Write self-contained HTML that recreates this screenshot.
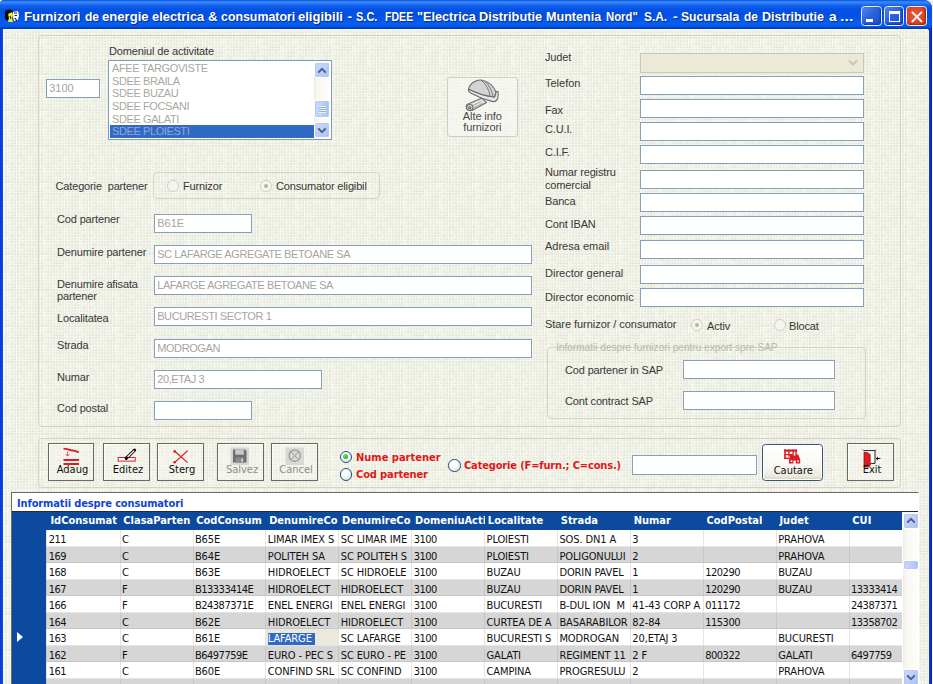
<!DOCTYPE html>
<html lang="ro">
<head>
<meta charset="utf-8">
<title>Furnizori de energie electrica &amp; consumatori eligibili</title>
<style>
*{box-sizing:border-box;margin:0;padding:0}
html,body{width:933px;height:684px;overflow:hidden;background:#f4f4ee}
body{position:relative;font-family:"Liberation Sans",sans-serif;font-size:11px;color:#222}
.abs,#win *{position:absolute}
#win{position:absolute;left:0;top:0;width:932px;height:690px;overflow:hidden;border-radius:4px 8px 0 0;background:linear-gradient(90deg,#0838d0 0,#0a48e2 2px,#0a48e2 928px,#0a3fdc 929px,#0426b4 931.5px,#021c98 932px)}
/* title bar */
#tb{left:0;top:0;width:932px;height:29px;border-radius:4px 8px 0 0;background:linear-gradient(#0a4cd4 0,#2f7ef6 1.5px,#3585fb 3px,#1565ee 5px,#0452e4 9px,#0350e4 15px,#0558ec 20px,#0660f2 24px,#0556e6 26.5px,#0342c8 28px,#02329f 29px)}
#ttl{left:24px;top:7.6px;width:840px;height:18px;line-height:18px;color:#fff;font-weight:bold;font-size:13.5px;white-space:nowrap;text-shadow:1px 1px 1px #0a2a8a}
.wb{top:6px;width:20.5px;height:20px;border:1px solid #e8f0ff;border-radius:3.5px;background:linear-gradient(135deg,#4f86f2 0,#2c63de 45%,#1d4ecb 100%);box-shadow:inset -1px -1px 2px #1236a8}
.wb.cl{background:radial-gradient(circle at 45% 45%,#f05a36 0,#e2482a 50%,#c7360f 100%);box-shadow:inset -1px -1px 2px #9a2a0a}
/* client */
#cl{left:3px;top:29px;width:925px;height:655px;border-top:1px solid #fbfbf6;border-left:1px solid #fbfbf6;background:#eff0e6}
.gb{border:1px solid #d5d3c4;border-radius:4px}
.lbl{white-space:nowrap;line-height:14px;color:#383838;letter-spacing:-.15px}
.tx{background:#fff;border:1px solid #86a0bb;height:19px;line-height:17px;padding-left:2.2px;color:#a6a59c;white-space:nowrap;overflow:hidden}

.gb2{border:1px solid #d6d5c7;border-radius:4px}
.tx.w{color:#000}
.lb{background:#fff;border:1px solid #7f9db9}
.li{left:1px;width:204px;height:13px;line-height:13px;padding-left:2px;color:#a9a8a0;white-space:nowrap;letter-spacing:-.4px}
.li.sel{background:#316ac5;color:#8fa8d8}
.rd{width:12px;height:12px;border-radius:50%;border:1px solid #d2d0c4;background:#f6f6f0}
.rd.on::after{content:"";position:absolute;left:3px;top:3px;width:4px;height:4px;border-radius:50%;background:#b5b3a5}
.dis{color:#2a2a2a}

.tb{font-family:"DejaVu Sans Condensed","DejaVu Sans","Liberation Sans",sans-serif}
.btn{border:1px solid #696962;background:rgba(250,250,244,.35);box-shadow:inset 1px 1px 0 rgba(255,255,255,.8)}
.btn.xp{border:1.5px solid #3d5578;border-radius:3.5px;background:linear-gradient(#ffffff 0,#f8f8f4 55%,#eceadf 88%,#d9d6c8 100%);box-shadow:inset 0 0 0 1px #fdfdfb,inset -1px -2px 1px #dcdacd}
.btn .cap{left:1.5px;width:100%;text-align:center;bottom:3.8px;line-height:13px;font-size:11px;color:#111;font-family:"DejaVu Sans Condensed","Liberation Sans",sans-serif}
.btn.off .cap{color:#8e8e86}
.xr{width:12.5px;height:12.5px;border-radius:50%;border:1px solid #1c5180;background:radial-gradient(circle at 35% 30%,#fff 30%,#dcdad0 100%)}
.xr.on::after{content:"";position:absolute;left:2.75px;top:2.75px;width:5px;height:5px;border-radius:50%;background:radial-gradient(circle at 35% 30%,#6fdc6a,#1e9a1e)}
.rl{color:#e01818;font-weight:bold;font-size:11px;line-height:13px;white-space:nowrap;font-family:"DejaVu Sans Condensed","Liberation Sans",sans-serif}
#grid{left:11px;top:492px;width:908px;height:200px;border:1px solid #6b6b66;border-right-color:#fff;background:#fff;overflow:hidden;font-family:"DejaVu Sans Condensed","Liberation Sans",sans-serif;font-size:11px}
#gt{left:5px;top:4px;line-height:14px;color:#1046cc;font-weight:bold;font-size:11px;letter-spacing:-.13px;white-space:nowrap}
#gh{left:0;top:19px;width:889.8px;height:18px;background:#0b4a9e}
#gl{left:0;top:18.3px;width:908px;height:1.1px;background:#2a2a26}
#gs{left:0;top:37px;width:34.5px;height:170px;background:#0b4a9e}
.hc{top:2px;line-height:14px;color:#fff;font-weight:bold;white-space:nowrap;overflow:hidden}
.gr{left:34.3px;width:855.7px;height:16.5px;background:#fff}
.gr.g{background:#d6d6d6}
.gc{top:0;height:16.5px;line-height:20.4px;padding-left:1.4px;letter-spacing:-.12px;border-left:1px solid #e4e4e4;border-bottom:1px solid #e4e4e4;color:#111;white-space:pre;overflow:hidden}
.gr.g .gc{border-left-color:#c6c6c6;border-bottom-color:#c6c6c6}

.sbt{background:linear-gradient(90deg,#eeede5 0,#f8f7f2 3px,#fefefb 100%)}
.sbb{left:0;width:100%;border:1px solid #fff;border-radius:2.5px;background:linear-gradient(135deg,#cbdafc 0,#bdcff8 50%,#adc2f2 100%);box-shadow:inset 0 0 0 1px #b7caf5,inset -1px -1px 1px #98b0e6}
.sbb svg{left:2.5px;top:3.5px}
.sbh{left:0;width:100%;border:1px solid #fff;border-radius:2.5px;background:linear-gradient(90deg,#cad9fc 0,#bccff9 50%,#a9bff2 100%);box-shadow:inset 0 0 0 1px #b7caf5}
.btn.xp .cap{bottom:2.8px;left:1px}
#ttl span{top:0;white-space:nowrap;transform-origin:0 50%}
</style>
</head>
<body>
<div id="win">
 <div id="tb"></div>
 <div id="ttl"><span style="left:0.4px;transform:scaleX(0.978)">Furnizori</span><span style="left:60.8px;transform:scaleX(0.894)">de</span><span style="left:78.1px;transform:scaleX(0.97)">energie</span><span style="left:127.9px;transform:scaleX(0.953)">electrica</span><span style="left:184.1px;transform:scaleX(0.985)">&amp;</span><span style="left:196.7px;transform:scaleX(0.916)">consumatori</span><span style="left:274.3px;transform:scaleX(0.965)">eligibili</span><span style="left:323.5px;transform:scaleX(1.0)">-</span><span style="left:331.5px;transform:scaleX(0.815)">S.C.</span><span style="left:360.5px;transform:scaleX(0.783)">FDEE</span><span style="left:392.9px;transform:scaleX(0.939)">&quot;Electrica</span><span style="left:455.3px;transform:scaleX(0.945)">Distributie</span><span style="left:522.3px;transform:scaleX(0.932)">Muntenia</span><span style="left:581.5px;transform:scaleX(0.839)">Nord&quot;</span><span style="left:620.1px;transform:scaleX(0.883)">S.A.</span><span style="left:649.0px;transform:scaleX(1.044)">-</span><span style="left:657.1px;transform:scaleX(0.902)">Sucursala</span><span style="left:719.5px;transform:scaleX(0.875)">de</span><span style="left:738.0px;transform:scaleX(0.927)">Distributie</span><span style="left:804.5px;transform:scaleX(1.025)">a</span><span style="left:816.1px;transform:scaleX(1.189)">...</span></div>
 <div class="wb" style="left:861px"><div style="left:4px;top:12px;width:7px;height:3px;background:#fff"></div></div>
 <div class="wb" style="left:883.5px"><div style="left:4px;top:4px;width:11px;height:11px;border:1px solid #fff;border-top-width:3px"></div></div>
 <div class="wb cl" style="left:906px"><svg style="left:3.6px;top:3.6px" width="12" height="12" viewBox="0 0 12 12"><path d="M1.4 1.4L10.4 10.4M10.4 1.4L1.4 10.4" stroke="#fff" stroke-width="2" stroke-linecap="round"/></svg></div>
 <svg id="ico" style="left:5px;top:8.6px" width="16" height="15" viewBox="0 0 16 15"><path d="M0 2Q2 0 6 0.5L8 3L5 6L3 12L0 10Z" fill="#0a0a0a"/><path d="M3 5L7 3L8 6L7 9L8 13L3 13L4 9Z" fill="#f2ee1c"/><path d="M8 3L13 2L14 6L13 11L9 12L8 8Z" fill="#fbfbf0"/><path d="M9 4L12 4M9.5 6.5L12 6.5M10 9L12 12" stroke="#2a1040" stroke-width="1.2"/><path d="M5 7L6 10" stroke="#1a1a00" stroke-width="1"/></svg>
 <div id="cl"><svg id="bgsvg" width="925" height="655" style="left:0;top:0"><defs><pattern id="wv" width="36" height="36" patternUnits="userSpaceOnUse"><rect width="36" height="36" fill="#eff0e6"/><rect x="0" y="0" width="1" height="1" fill="#f6f7ed"/><rect x="1" y="0" width="1" height="1" fill="#f2f3e9"/><rect x="3" y="0" width="1" height="1" fill="#f7f8ee"/><rect x="4" y="0" width="2" height="1" fill="#f6f7ed"/><rect x="6" y="0" width="1" height="1" fill="#f8f9ef"/><rect x="7" y="0" width="1" height="1" fill="#f3f4ea"/><rect x="8" y="0" width="1" height="1" fill="#f2f3e9"/><rect x="9" y="0" width="1" height="1" fill="#f6f7ed"/><rect x="11" y="0" width="1" height="1" fill="#f1f2e8"/><rect x="12" y="0" width="1" height="1" fill="#f7f8ee"/><rect x="14" y="0" width="1" height="1" fill="#f2f3e9"/><rect x="15" y="0" width="1" height="1" fill="#f8f9ef"/><rect x="17" y="0" width="1" height="1" fill="#f2f3e9"/><rect x="18" y="0" width="1" height="1" fill="#f3f4ea"/><rect x="21" y="0" width="1" height="1" fill="#f8f9ef"/><rect x="22" y="0" width="1" height="1" fill="#f4f5eb"/><rect x="24" y="0" width="1" height="1" fill="#f8f9ef"/><rect x="25" y="0" width="1" height="1" fill="#f4f5eb"/><rect x="26" y="0" width="1" height="1" fill="#f1f2e8"/><rect x="27" y="0" width="1" height="1" fill="#f7f8ee"/><rect x="28" y="0" width="1" height="1" fill="#f3f4ea"/><rect x="29" y="0" width="1" height="1" fill="#f5f6ec"/><rect x="30" y="0" width="1" height="1" fill="#f6f7ed"/><rect x="32" y="0" width="1" height="1" fill="#f1f2e8"/><rect x="33" y="0" width="1" height="1" fill="#f7f8ee"/><rect x="0" y="1" width="1" height="1" fill="#f4f5eb"/><rect x="2" y="1" width="1" height="1" fill="#eaebe1"/><rect x="3" y="1" width="1" height="1" fill="#f2f3e9"/><rect x="5" y="1" width="1" height="1" fill="#edeee4"/><rect x="6" y="1" width="1" height="1" fill="#f5f6ec"/><rect x="8" y="1" width="1" height="1" fill="#edeee4"/><rect x="9" y="1" width="1" height="1" fill="#f5f6ec"/><rect x="11" y="1" width="1" height="1" fill="#e9eae0"/><rect x="12" y="1" width="1" height="1" fill="#f2f3e9"/><rect x="14" y="1" width="1" height="1" fill="#e9eae0"/><rect x="15" y="1" width="1" height="1" fill="#f2f3e9"/><rect x="17" y="1" width="1" height="1" fill="#e9eae0"/><rect x="18" y="1" width="1" height="1" fill="#f1f2e8"/><rect x="19" y="1" width="1" height="1" fill="#ebece2"/><rect x="20" y="1" width="1" height="1" fill="#eaebe1"/><rect x="21" y="1" width="1" height="1" fill="#f4f5eb"/><rect x="22" y="1" width="1" height="1" fill="#f1f2e8"/><rect x="23" y="1" width="1" height="1" fill="#ecede3"/><rect x="24" y="1" width="1" height="1" fill="#f4f5eb"/><rect x="26" y="1" width="1" height="1" fill="#ebece2"/><rect x="27" y="1" width="1" height="1" fill="#f6f7ed"/><rect x="29" y="1" width="1" height="1" fill="#ecede3"/><rect x="31" y="1" width="2" height="1" fill="#eaebe1"/><rect x="33" y="1" width="1" height="1" fill="#f1f2e8"/><rect x="35" y="1" width="1" height="1" fill="#eaebe1"/><rect x="0" y="2" width="1" height="1" fill="#f4f5eb"/><rect x="1" y="2" width="1" height="1" fill="#eaebe1"/><rect x="2" y="2" width="1" height="1" fill="#e6e7dd"/><rect x="3" y="2" width="1" height="1" fill="#f2f3e9"/><rect x="4" y="2" width="1" height="1" fill="#ebece2"/><rect x="5" y="2" width="1" height="1" fill="#e7e8de"/><rect x="6" y="2" width="1" height="1" fill="#f4f5eb"/><rect x="7" y="2" width="1" height="1" fill="#ecede3"/><rect x="8" y="2" width="1" height="1" fill="#e7e8de"/><rect x="9" y="2" width="1" height="1" fill="#f3f4ea"/><rect x="10" y="2" width="1" height="1" fill="#e9eae0"/><rect x="11" y="2" width="1" height="1" fill="#e7e8de"/><rect x="12" y="2" width="1" height="1" fill="#f4f5eb"/><rect x="13" y="2" width="1" height="1" fill="#ebece2"/><rect x="14" y="2" width="1" height="1" fill="#e7e8de"/><rect x="15" y="2" width="1" height="1" fill="#f3f4ea"/><rect x="16" y="2" width="1" height="1" fill="#edeee4"/><rect x="17" y="2" width="1" height="1" fill="#e8e9df"/><rect x="18" y="2" width="1" height="1" fill="#f2f3e9"/><rect x="19" y="2" width="1" height="1" fill="#e9eae0"/><rect x="20" y="2" width="1" height="1" fill="#e5e6dc"/><rect x="21" y="2" width="1" height="1" fill="#f4f5eb"/><rect x="23" y="2" width="1" height="1" fill="#e8e9df"/><rect x="24" y="2" width="1" height="1" fill="#f5f6ec"/><rect x="25" y="2" width="1" height="1" fill="#ebece2"/><rect x="26" y="2" width="1" height="1" fill="#e7e8de"/><rect x="27" y="2" width="1" height="1" fill="#f4f5eb"/><rect x="28" y="2" width="1" height="1" fill="#ebece2"/><rect x="29" y="2" width="1" height="1" fill="#e8e9df"/><rect x="30" y="2" width="1" height="1" fill="#f2f3e9"/><rect x="31" y="2" width="1" height="1" fill="#eaebe1"/><rect x="32" y="2" width="1" height="1" fill="#e4e5db"/><rect x="33" y="2" width="1" height="1" fill="#f2f3e9"/><rect x="34" y="2" width="1" height="1" fill="#e7e8de"/><rect x="35" y="2" width="1" height="1" fill="#e4e5db"/><rect x="0" y="3" width="1" height="1" fill="#f6f7ed"/><rect x="3" y="3" width="1" height="1" fill="#f8f9ef"/><rect x="4" y="3" width="2" height="1" fill="#f4f5eb"/><rect x="6" y="3" width="1" height="1" fill="#f6f7ed"/><rect x="7" y="3" width="1" height="1" fill="#f4f5eb"/><rect x="8" y="3" width="1" height="1" fill="#f3f4ea"/><rect x="9" y="3" width="1" height="1" fill="#f2f3e9"/><rect x="11" y="3" width="1" height="1" fill="#ecede3"/><rect x="12" y="3" width="1" height="1" fill="#f8f9ef"/><rect x="13" y="3" width="1" height="1" fill="#f6f7ed"/><rect x="14" y="3" width="1" height="1" fill="#f5f6ec"/><rect x="15" y="3" width="1" height="1" fill="#fafbf1"/><rect x="16" y="3" width="1" height="1" fill="#f3f4ea"/><rect x="17" y="3" width="1" height="1" fill="#f5f6ec"/><rect x="18" y="3" width="1" height="1" fill="#fafbf1"/><rect x="19" y="3" width="1" height="1" fill="#f2f3e9"/><rect x="21" y="3" width="1" height="1" fill="#f5f6ec"/><rect x="22" y="3" width="1" height="1" fill="#f3f4ea"/><rect x="23" y="3" width="2" height="1" fill="#f4f5eb"/><rect x="25" y="3" width="1" height="1" fill="#f1f2e8"/><rect x="26" y="3" width="1" height="1" fill="#edeee4"/><rect x="27" y="3" width="1" height="1" fill="#f2f3e9"/><rect x="30" y="3" width="1" height="1" fill="#f6f7ed"/><rect x="32" y="3" width="2" height="1" fill="#f3f4ea"/><rect x="35" y="3" width="1" height="1" fill="#edeee4"/><rect x="0" y="4" width="1" height="1" fill="#f1f2e8"/><rect x="1" y="4" width="1" height="1" fill="#edeee4"/><rect x="2" y="4" width="1" height="1" fill="#e9eae0"/><rect x="3" y="4" width="1" height="1" fill="#f5f6ec"/><rect x="4" y="4" width="1" height="1" fill="#f4f5eb"/><rect x="5" y="4" width="1" height="1" fill="#edeee4"/><rect x="6" y="4" width="1" height="1" fill="#f4f5eb"/><rect x="10" y="4" width="1" height="1" fill="#edeee4"/><rect x="11" y="4" width="1" height="1" fill="#e9eae0"/><rect x="12" y="4" width="1" height="1" fill="#f9faf0"/><rect x="13" y="4" width="1" height="1" fill="#f1f2e8"/><rect x="14" y="4" width="1" height="1" fill="#ecede3"/><rect x="15" y="4" width="1" height="1" fill="#f5f6ec"/><rect x="16" y="4" width="1" height="1" fill="#f3f4ea"/><rect x="18" y="4" width="1" height="1" fill="#f5f6ec"/><rect x="20" y="4" width="1" height="1" fill="#ebece2"/><rect x="21" y="4" width="1" height="1" fill="#f6f7ed"/><rect x="22" y="4" width="1" height="1" fill="#f3f4ea"/><rect x="23" y="4" width="1" height="1" fill="#eaebe1"/><rect x="25" y="4" width="1" height="1" fill="#edeee4"/><rect x="26" y="4" width="1" height="1" fill="#eaebe1"/><rect x="28" y="4" width="1" height="1" fill="#eaebe1"/><rect x="29" y="4" width="1" height="1" fill="#e7e8de"/><rect x="30" y="4" width="1" height="1" fill="#f4f5eb"/><rect x="31" y="4" width="2" height="1" fill="#ecede3"/><rect x="34" y="4" width="1" height="1" fill="#ecede3"/><rect x="35" y="4" width="1" height="1" fill="#e6e7dd"/><rect x="0" y="5" width="1" height="1" fill="#f3f4ea"/><rect x="1" y="5" width="1" height="1" fill="#e9eae0"/><rect x="2" y="5" width="1" height="1" fill="#e2e3d9"/><rect x="3" y="5" width="1" height="1" fill="#f7f8ee"/><rect x="5" y="5" width="1" height="1" fill="#ecede3"/><rect x="6" y="5" width="1" height="1" fill="#f2f3e9"/><rect x="7" y="5" width="1" height="1" fill="#eaebe1"/><rect x="8" y="5" width="1" height="1" fill="#e8e9df"/><rect x="10" y="5" width="1" height="1" fill="#e8e9df"/><rect x="11" y="5" width="1" height="1" fill="#e1e2d8"/><rect x="12" y="5" width="1" height="1" fill="#f9faf0"/><rect x="14" y="5" width="1" height="1" fill="#eaebe1"/><rect x="15" y="5" width="1" height="1" fill="#f4f5eb"/><rect x="17" y="5" width="1" height="1" fill="#e6e7dd"/><rect x="18" y="5" width="1" height="1" fill="#f6f7ed"/><rect x="19" y="5" width="1" height="1" fill="#ebece2"/><rect x="20" y="5" width="1" height="1" fill="#e4e5db"/><rect x="21" y="5" width="1" height="1" fill="#f2f3e9"/><rect x="23" y="5" width="1" height="1" fill="#e4e5db"/><rect x="25" y="5" width="1" height="1" fill="#e8e9df"/><rect x="26" y="5" width="1" height="1" fill="#e3e4da"/><rect x="28" y="5" width="1" height="1" fill="#e8e9df"/><rect x="29" y="5" width="1" height="1" fill="#e2e3d9"/><rect x="30" y="5" width="1" height="1" fill="#f4f5eb"/><rect x="31" y="5" width="1" height="1" fill="#e9eae0"/><rect x="32" y="5" width="1" height="1" fill="#e5e6dc"/><rect x="33" y="5" width="1" height="1" fill="#f2f3e9"/><rect x="34" y="5" width="1" height="1" fill="#e6e7dd"/><rect x="35" y="5" width="1" height="1" fill="#e1e2d8"/><rect x="0" y="6" width="1" height="1" fill="#f3f4ea"/><rect x="2" y="6" width="1" height="1" fill="#edeee4"/><rect x="3" y="6" width="1" height="1" fill="#f3f4ea"/><rect x="4" y="6" width="1" height="1" fill="#f2f3e9"/><rect x="6" y="6" width="1" height="1" fill="#f4f5eb"/><rect x="9" y="6" width="1" height="1" fill="#f7f8ee"/><rect x="10" y="6" width="1" height="1" fill="#f1f2e8"/><rect x="12" y="6" width="1" height="1" fill="#f6f7ed"/><rect x="14" y="6" width="1" height="1" fill="#f1f2e8"/><rect x="15" y="6" width="1" height="1" fill="#f7f8ee"/><rect x="16" y="6" width="1" height="1" fill="#f2f3e9"/><rect x="17" y="6" width="1" height="1" fill="#f5f6ec"/><rect x="18" y="6" width="1" height="1" fill="#f6f7ed"/><rect x="19" y="6" width="1" height="1" fill="#f1f2e8"/><rect x="20" y="6" width="1" height="1" fill="#f4f5eb"/><rect x="21" y="6" width="1" height="1" fill="#f6f7ed"/><rect x="22" y="6" width="2" height="1" fill="#f3f4ea"/><rect x="24" y="6" width="1" height="1" fill="#f7f8ee"/><rect x="25" y="6" width="1" height="1" fill="#f2f3e9"/><rect x="27" y="6" width="1" height="1" fill="#f7f8ee"/><rect x="29" y="6" width="1" height="1" fill="#f1f2e8"/><rect x="30" y="6" width="1" height="1" fill="#f7f8ee"/><rect x="33" y="6" width="1" height="1" fill="#f7f8ee"/><rect x="34" y="6" width="1" height="1" fill="#f2f3e9"/><rect x="1" y="7" width="1" height="1" fill="#eaebe1"/><rect x="2" y="7" width="1" height="1" fill="#e6e7dd"/><rect x="4" y="7" width="2" height="1" fill="#eaebe1"/><rect x="6" y="7" width="1" height="1" fill="#ebece2"/><rect x="7" y="7" width="1" height="1" fill="#eaebe1"/><rect x="8" y="7" width="1" height="1" fill="#e6e7dd"/><rect x="10" y="7" width="1" height="1" fill="#ecede3"/><rect x="11" y="7" width="1" height="1" fill="#e7e8de"/><rect x="12" y="7" width="1" height="1" fill="#f1f2e8"/><rect x="13" y="7" width="1" height="1" fill="#e9eae0"/><rect x="14" y="7" width="1" height="1" fill="#e7e8de"/><rect x="15" y="7" width="1" height="1" fill="#f4f5eb"/><rect x="17" y="7" width="1" height="1" fill="#e9eae0"/><rect x="19" y="7" width="1" height="1" fill="#edeee4"/><rect x="20" y="7" width="1" height="1" fill="#e7e8de"/><rect x="23" y="7" width="1" height="1" fill="#e8e9df"/><rect x="24" y="7" width="1" height="1" fill="#f2f3e9"/><rect x="25" y="7" width="1" height="1" fill="#ebece2"/><rect x="26" y="7" width="1" height="1" fill="#e8e9df"/><rect x="27" y="7" width="1" height="1" fill="#f1f2e8"/><rect x="28" y="7" width="2" height="1" fill="#ebece2"/><rect x="30" y="7" width="1" height="1" fill="#f1f2e8"/><rect x="31" y="7" width="1" height="1" fill="#ecede3"/><rect x="32" y="7" width="1" height="1" fill="#e9eae0"/><rect x="34" y="7" width="1" height="1" fill="#ecede3"/><rect x="35" y="7" width="1" height="1" fill="#e8e9df"/><rect x="1" y="8" width="1" height="1" fill="#e6e7dd"/><rect x="2" y="8" width="1" height="1" fill="#dfe0d6"/><rect x="4" y="8" width="1" height="1" fill="#e7e8de"/><rect x="5" y="8" width="1" height="1" fill="#e3e4da"/><rect x="6" y="8" width="1" height="1" fill="#ebece2"/><rect x="7" y="8" width="1" height="1" fill="#e3e4da"/><rect x="8" y="8" width="1" height="1" fill="#e0e1d7"/><rect x="10" y="8" width="1" height="1" fill="#e8e9df"/><rect x="11" y="8" width="1" height="1" fill="#e4e5db"/><rect x="12" y="8" width="1" height="1" fill="#f2f3e9"/><rect x="13" y="8" width="1" height="1" fill="#e5e6dc"/><rect x="14" y="8" width="1" height="1" fill="#e3e4da"/><rect x="15" y="8" width="1" height="1" fill="#f3f4ea"/><rect x="16" y="8" width="1" height="1" fill="#ebece2"/><rect x="17" y="8" width="1" height="1" fill="#e5e6dc"/><rect x="18" y="8" width="1" height="1" fill="#f1f2e8"/><rect x="19" y="8" width="1" height="1" fill="#eaebe1"/><rect x="20" y="8" width="1" height="1" fill="#e3e4da"/><rect x="21" y="8" width="1" height="1" fill="#f1f2e8"/><rect x="22" y="8" width="1" height="1" fill="#ecede3"/><rect x="23" y="8" width="1" height="1" fill="#e2e3d9"/><rect x="25" y="8" width="1" height="1" fill="#e6e7dd"/><rect x="26" y="8" width="1" height="1" fill="#e1e2d8"/><rect x="28" y="8" width="1" height="1" fill="#e8e9df"/><rect x="29" y="8" width="1" height="1" fill="#e2e3d9"/><rect x="31" y="8" width="1" height="1" fill="#e8e9df"/><rect x="32" y="8" width="1" height="1" fill="#e4e5db"/><rect x="34" y="8" width="1" height="1" fill="#e8e9df"/><rect x="35" y="8" width="1" height="1" fill="#e1e2d8"/><rect x="0" y="9" width="1" height="1" fill="#fbfcf2"/><rect x="1" y="9" width="2" height="1" fill="#f5f6ec"/><rect x="3" y="9" width="2" height="1" fill="#f9faf0"/><rect x="5" y="9" width="1" height="1" fill="#f8f9ef"/><rect x="6" y="9" width="1" height="1" fill="#f7f8ee"/><rect x="7" y="9" width="1" height="1" fill="#f4f5eb"/><rect x="8" y="9" width="2" height="1" fill="#f6f7ed"/><rect x="10" y="9" width="1" height="1" fill="#f2f3e9"/><rect x="11" y="9" width="1" height="1" fill="#f4f5eb"/><rect x="12" y="9" width="1" height="1" fill="#f3f4ea"/><rect x="13" y="9" width="1" height="1" fill="#f1f2e8"/><rect x="15" y="9" width="1" height="1" fill="#f6f7ed"/><rect x="17" y="9" width="1" height="1" fill="#f2f3e9"/><rect x="18" y="9" width="1" height="1" fill="#f4f5eb"/><rect x="21" y="9" width="1" height="1" fill="#f4f5eb"/><rect x="23" y="9" width="1" height="1" fill="#f1f2e8"/><rect x="24" y="9" width="1" height="1" fill="#fafbf1"/><rect x="25" y="9" width="2" height="1" fill="#f1f2e8"/><rect x="27" y="9" width="1" height="1" fill="#f4f5eb"/><rect x="29" y="9" width="1" height="1" fill="#f2f3e9"/><rect x="30" y="9" width="1" height="1" fill="#f9faf0"/><rect x="31" y="9" width="1" height="1" fill="#f4f5eb"/><rect x="32" y="9" width="2" height="1" fill="#f3f4ea"/><rect x="35" y="9" width="1" height="1" fill="#f3f4ea"/><rect x="0" y="10" width="1" height="1" fill="#f8f9ef"/><rect x="1" y="10" width="1" height="1" fill="#f2f3e9"/><rect x="2" y="10" width="1" height="1" fill="#edeee4"/><rect x="3" y="10" width="1" height="1" fill="#f9faf0"/><rect x="4" y="10" width="1" height="1" fill="#f3f4ea"/><rect x="5" y="10" width="1" height="1" fill="#f1f2e8"/><rect x="6" y="10" width="1" height="1" fill="#f4f5eb"/><rect x="8" y="10" width="1" height="1" fill="#ecede3"/><rect x="9" y="10" width="1" height="1" fill="#f4f5eb"/><rect x="10" y="10" width="2" height="1" fill="#edeee4"/><rect x="13" y="10" width="1" height="1" fill="#edeee4"/><rect x="14" y="10" width="1" height="1" fill="#eaebe1"/><rect x="15" y="10" width="1" height="1" fill="#f2f3e9"/><rect x="16" y="10" width="1" height="1" fill="#ebece2"/><rect x="17" y="10" width="1" height="1" fill="#e8e9df"/><rect x="18" y="10" width="1" height="1" fill="#f3f4ea"/><rect x="19" y="10" width="1" height="1" fill="#ecede3"/><rect x="20" y="10" width="1" height="1" fill="#e8e9df"/><rect x="21" y="10" width="1" height="1" fill="#f2f3e9"/><rect x="22" y="10" width="1" height="1" fill="#ebece2"/><rect x="23" y="10" width="1" height="1" fill="#eaebe1"/><rect x="24" y="10" width="1" height="1" fill="#f4f5eb"/><rect x="27" y="10" width="1" height="1" fill="#f2f3e9"/><rect x="29" y="10" width="1" height="1" fill="#eaebe1"/><rect x="30" y="10" width="1" height="1" fill="#f8f9ef"/><rect x="31" y="10" width="1" height="1" fill="#f1f2e8"/><rect x="32" y="10" width="1" height="1" fill="#edeee4"/><rect x="33" y="10" width="1" height="1" fill="#f1f2e8"/><rect x="34" y="10" width="1" height="1" fill="#edeee4"/><rect x="35" y="10" width="1" height="1" fill="#eaebe1"/><rect x="0" y="11" width="1" height="1" fill="#f6f7ed"/><rect x="2" y="11" width="1" height="1" fill="#e7e8de"/><rect x="3" y="11" width="1" height="1" fill="#f7f8ee"/><rect x="5" y="11" width="1" height="1" fill="#ecede3"/><rect x="6" y="11" width="1" height="1" fill="#f7f8ee"/><rect x="8" y="11" width="1" height="1" fill="#e7e8de"/><rect x="9" y="11" width="1" height="1" fill="#f4f5eb"/><rect x="11" y="11" width="1" height="1" fill="#e6e7dd"/><rect x="12" y="11" width="1" height="1" fill="#f3f4ea"/><rect x="13" y="11" width="1" height="1" fill="#ecede3"/><rect x="14" y="11" width="1" height="1" fill="#e6e7dd"/><rect x="15" y="11" width="1" height="1" fill="#f2f3e9"/><rect x="16" y="11" width="1" height="1" fill="#e8e9df"/><rect x="17" y="11" width="1" height="1" fill="#e4e5db"/><rect x="18" y="11" width="1" height="1" fill="#f3f4ea"/><rect x="19" y="11" width="1" height="1" fill="#e9eae0"/><rect x="20" y="11" width="1" height="1" fill="#e3e4da"/><rect x="22" y="11" width="1" height="1" fill="#e8e9df"/><rect x="23" y="11" width="1" height="1" fill="#e2e3d9"/><rect x="24" y="11" width="1" height="1" fill="#f3f4ea"/><rect x="25" y="11" width="1" height="1" fill="#edeee4"/><rect x="26" y="11" width="1" height="1" fill="#e9eae0"/><rect x="27" y="11" width="1" height="1" fill="#f1f2e8"/><rect x="28" y="11" width="1" height="1" fill="#e8e9df"/><rect x="29" y="11" width="1" height="1" fill="#e6e7dd"/><rect x="30" y="11" width="1" height="1" fill="#f5f6ec"/><rect x="31" y="11" width="1" height="1" fill="#edeee4"/><rect x="32" y="11" width="1" height="1" fill="#e6e7dd"/><rect x="33" y="11" width="1" height="1" fill="#f1f2e8"/><rect x="34" y="11" width="1" height="1" fill="#ebece2"/><rect x="35" y="11" width="1" height="1" fill="#e5e6dc"/><rect x="0" y="12" width="1" height="1" fill="#fbfcf2"/><rect x="1" y="12" width="1" height="1" fill="#f7f8ee"/><rect x="2" y="12" width="1" height="1" fill="#f4f5eb"/><rect x="3" y="12" width="1" height="1" fill="#f9faf0"/><rect x="4" y="12" width="2" height="1" fill="#f6f7ed"/><rect x="6" y="12" width="1" height="1" fill="#f3f4ea"/><rect x="9" y="12" width="1" height="1" fill="#f3f4ea"/><rect x="11" y="12" width="1" height="1" fill="#f2f3e9"/><rect x="12" y="12" width="1" height="1" fill="#fbfcf2"/><rect x="13" y="12" width="1" height="1" fill="#f4f5eb"/><rect x="14" y="12" width="1" height="1" fill="#f2f3e9"/><rect x="15" y="12" width="1" height="1" fill="#f8f9ef"/><rect x="16" y="12" width="1" height="1" fill="#f3f4ea"/><rect x="17" y="12" width="1" height="1" fill="#f2f3e9"/><rect x="18" y="12" width="1" height="1" fill="#f9faf0"/><rect x="19" y="12" width="1" height="1" fill="#f4f5eb"/><rect x="20" y="12" width="1" height="1" fill="#f6f7ed"/><rect x="21" y="12" width="2" height="1" fill="#f4f5eb"/><rect x="23" y="12" width="1" height="1" fill="#f1f2e8"/><rect x="24" y="12" width="1" height="1" fill="#f2f3e9"/><rect x="27" y="12" width="1" height="1" fill="#f6f7ed"/><rect x="28" y="12" width="1" height="1" fill="#f1f2e8"/><rect x="29" y="12" width="1" height="1" fill="#f4f5eb"/><rect x="30" y="12" width="1" height="1" fill="#f7f8ee"/><rect x="31" y="12" width="2" height="1" fill="#f5f6ec"/><rect x="33" y="12" width="1" height="1" fill="#f3f4ea"/><rect x="35" y="12" width="1" height="1" fill="#f1f2e8"/><rect x="0" y="13" width="1" height="1" fill="#f6f7ed"/><rect x="1" y="13" width="1" height="1" fill="#f3f4ea"/><rect x="2" y="13" width="1" height="1" fill="#edeee4"/><rect x="3" y="13" width="1" height="1" fill="#f6f7ed"/><rect x="4" y="13" width="2" height="1" fill="#f1f2e8"/><rect x="6" y="13" width="1" height="1" fill="#f2f3e9"/><rect x="7" y="13" width="1" height="1" fill="#ebece2"/><rect x="8" y="13" width="1" height="1" fill="#e7e8de"/><rect x="9" y="13" width="1" height="1" fill="#f1f2e8"/><rect x="10" y="13" width="1" height="1" fill="#edeee4"/><rect x="11" y="13" width="1" height="1" fill="#e7e8de"/><rect x="12" y="13" width="1" height="1" fill="#f6f7ed"/><rect x="14" y="13" width="1" height="1" fill="#edeee4"/><rect x="15" y="13" width="1" height="1" fill="#f2f3e9"/><rect x="17" y="13" width="1" height="1" fill="#e9eae0"/><rect x="18" y="13" width="1" height="1" fill="#f5f6ec"/><rect x="20" y="13" width="1" height="1" fill="#ecede3"/><rect x="21" y="13" width="1" height="1" fill="#f2f3e9"/><rect x="22" y="13" width="1" height="1" fill="#f1f2e8"/><rect x="23" y="13" width="1" height="1" fill="#ecede3"/><rect x="25" y="13" width="1" height="1" fill="#ebece2"/><rect x="26" y="13" width="1" height="1" fill="#eaebe1"/><rect x="27" y="13" width="1" height="1" fill="#f4f5eb"/><rect x="29" y="13" width="1" height="1" fill="#ecede3"/><rect x="30" y="13" width="1" height="1" fill="#f3f4ea"/><rect x="31" y="13" width="1" height="1" fill="#f1f2e8"/><rect x="32" y="13" width="1" height="1" fill="#ebece2"/><rect x="33" y="13" width="1" height="1" fill="#f2f3e9"/><rect x="35" y="13" width="1" height="1" fill="#e9eae0"/><rect x="0" y="14" width="1" height="1" fill="#f6f7ed"/><rect x="2" y="14" width="1" height="1" fill="#eaebe1"/><rect x="3" y="14" width="1" height="1" fill="#f6f7ed"/><rect x="4" y="14" width="1" height="1" fill="#edeee4"/><rect x="5" y="14" width="1" height="1" fill="#ecede3"/><rect x="7" y="14" width="1" height="1" fill="#e8e9df"/><rect x="8" y="14" width="1" height="1" fill="#e4e5db"/><rect x="10" y="14" width="1" height="1" fill="#e9eae0"/><rect x="11" y="14" width="1" height="1" fill="#e5e6dc"/><rect x="12" y="14" width="1" height="1" fill="#f4f5eb"/><rect x="13" y="14" width="1" height="1" fill="#ecede3"/><rect x="14" y="14" width="1" height="1" fill="#e6e7dd"/><rect x="15" y="14" width="1" height="1" fill="#f1f2e8"/><rect x="16" y="14" width="1" height="1" fill="#e9eae0"/><rect x="17" y="14" width="1" height="1" fill="#e4e5db"/><rect x="18" y="14" width="1" height="1" fill="#f8f9ef"/><rect x="20" y="14" width="1" height="1" fill="#eaebe1"/><rect x="21" y="14" width="1" height="1" fill="#f3f4ea"/><rect x="23" y="14" width="1" height="1" fill="#e3e4da"/><rect x="24" y="14" width="1" height="1" fill="#f1f2e8"/><rect x="25" y="14" width="1" height="1" fill="#e6e7dd"/><rect x="26" y="14" width="1" height="1" fill="#e3e4da"/><rect x="27" y="14" width="1" height="1" fill="#f6f7ed"/><rect x="28" y="14" width="1" height="1" fill="#ebece2"/><rect x="29" y="14" width="1" height="1" fill="#e5e6dc"/><rect x="30" y="14" width="1" height="1" fill="#f4f5eb"/><rect x="31" y="14" width="1" height="1" fill="#ecede3"/><rect x="32" y="14" width="1" height="1" fill="#e9eae0"/><rect x="33" y="14" width="1" height="1" fill="#f4f5eb"/><rect x="34" y="14" width="1" height="1" fill="#eaebe1"/><rect x="35" y="14" width="1" height="1" fill="#e6e7dd"/><rect x="0" y="15" width="1" height="1" fill="#f5f6ec"/><rect x="3" y="15" width="1" height="1" fill="#f7f8ee"/><rect x="4" y="15" width="1" height="1" fill="#f4f5eb"/><rect x="5" y="15" width="1" height="1" fill="#f3f4ea"/><rect x="6" y="15" width="1" height="1" fill="#fafbf1"/><rect x="7" y="15" width="1" height="1" fill="#f3f4ea"/><rect x="8" y="15" width="2" height="1" fill="#f7f8ee"/><rect x="10" y="15" width="1" height="1" fill="#f5f6ec"/><rect x="11" y="15" width="1" height="1" fill="#f1f2e8"/><rect x="12" y="15" width="1" height="1" fill="#f6f7ed"/><rect x="15" y="15" width="1" height="1" fill="#f3f4ea"/><rect x="18" y="15" width="1" height="1" fill="#f5f6ec"/><rect x="21" y="15" width="1" height="1" fill="#f5f6ec"/><rect x="22" y="15" width="1" height="1" fill="#f3f4ea"/><rect x="23" y="15" width="1" height="1" fill="#ecede3"/><rect x="24" y="15" width="1" height="1" fill="#f9faf0"/><rect x="25" y="15" width="2" height="1" fill="#f4f5eb"/><rect x="27" y="15" width="1" height="1" fill="#f3f4ea"/><rect x="28" y="15" width="1" height="1" fill="#f1f2e8"/><rect x="30" y="15" width="1" height="1" fill="#f9faf0"/><rect x="31" y="15" width="1" height="1" fill="#f2f3e9"/><rect x="33" y="15" width="1" height="1" fill="#f8f9ef"/><rect x="35" y="15" width="1" height="1" fill="#f2f3e9"/><rect x="0" y="16" width="1" height="1" fill="#f1f2e8"/><rect x="1" y="16" width="1" height="1" fill="#edeee4"/><rect x="2" y="16" width="1" height="1" fill="#e9eae0"/><rect x="3" y="16" width="1" height="1" fill="#f2f3e9"/><rect x="5" y="16" width="1" height="1" fill="#ebece2"/><rect x="6" y="16" width="1" height="1" fill="#f4f5eb"/><rect x="7" y="16" width="1" height="1" fill="#f2f3e9"/><rect x="8" y="16" width="1" height="1" fill="#ecede3"/><rect x="9" y="16" width="1" height="1" fill="#f3f4ea"/><rect x="11" y="16" width="1" height="1" fill="#ecede3"/><rect x="12" y="16" width="1" height="1" fill="#f2f3e9"/><rect x="13" y="16" width="1" height="1" fill="#ebece2"/><rect x="14" y="16" width="1" height="1" fill="#e8e9df"/><rect x="16" y="16" width="1" height="1" fill="#ecede3"/><rect x="17" y="16" width="1" height="1" fill="#e8e9df"/><rect x="18" y="16" width="1" height="1" fill="#f2f3e9"/><rect x="19" y="16" width="2" height="1" fill="#e9eae0"/><rect x="21" y="16" width="1" height="1" fill="#f1f2e8"/><rect x="22" y="16" width="1" height="1" fill="#edeee4"/><rect x="23" y="16" width="1" height="1" fill="#e6e7dd"/><rect x="24" y="16" width="1" height="1" fill="#f4f5eb"/><rect x="26" y="16" width="1" height="1" fill="#ecede3"/><rect x="29" y="16" width="1" height="1" fill="#eaebe1"/><rect x="30" y="16" width="1" height="1" fill="#f5f6ec"/><rect x="32" y="16" width="1" height="1" fill="#eaebe1"/><rect x="33" y="16" width="1" height="1" fill="#f5f6ec"/><rect x="35" y="16" width="1" height="1" fill="#e9eae0"/><rect x="0" y="17" width="1" height="1" fill="#f2f3e9"/><rect x="1" y="17" width="1" height="1" fill="#e7e8de"/><rect x="2" y="17" width="1" height="1" fill="#e4e5db"/><rect x="3" y="17" width="1" height="1" fill="#f3f4ea"/><rect x="4" y="17" width="1" height="1" fill="#ebece2"/><rect x="5" y="17" width="1" height="1" fill="#e7e8de"/><rect x="6" y="17" width="1" height="1" fill="#f7f8ee"/><rect x="8" y="17" width="1" height="1" fill="#e9eae0"/><rect x="9" y="17" width="1" height="1" fill="#f4f5eb"/><rect x="10" y="17" width="1" height="1" fill="#ecede3"/><rect x="11" y="17" width="1" height="1" fill="#e8e9df"/><rect x="13" y="17" width="1" height="1" fill="#e9eae0"/><rect x="14" y="17" width="1" height="1" fill="#e4e5db"/><rect x="15" y="17" width="1" height="1" fill="#f1f2e8"/><rect x="16" y="17" width="1" height="1" fill="#e7e8de"/><rect x="17" y="17" width="1" height="1" fill="#e5e6dc"/><rect x="19" y="17" width="1" height="1" fill="#e8e9df"/><rect x="20" y="17" width="1" height="1" fill="#e1e2d8"/><rect x="22" y="17" width="1" height="1" fill="#eaebe1"/><rect x="23" y="17" width="1" height="1" fill="#e3e4da"/><rect x="24" y="17" width="1" height="1" fill="#f3f4ea"/><rect x="26" y="17" width="1" height="1" fill="#e9eae0"/><rect x="27" y="17" width="1" height="1" fill="#f2f3e9"/><rect x="28" y="17" width="1" height="1" fill="#eaebe1"/><rect x="29" y="17" width="1" height="1" fill="#e2e3d9"/><rect x="30" y="17" width="1" height="1" fill="#f2f3e9"/><rect x="31" y="17" width="1" height="1" fill="#eaebe1"/><rect x="32" y="17" width="1" height="1" fill="#e4e5db"/><rect x="33" y="17" width="1" height="1" fill="#f2f3e9"/><rect x="34" y="17" width="1" height="1" fill="#ecede3"/><rect x="35" y="17" width="1" height="1" fill="#e4e5db"/><rect x="0" y="18" width="1" height="1" fill="#f6f7ed"/><rect x="3" y="18" width="1" height="1" fill="#f9faf0"/><rect x="4" y="18" width="1" height="1" fill="#f5f6ec"/><rect x="5" y="18" width="2" height="1" fill="#f4f5eb"/><rect x="7" y="18" width="1" height="1" fill="#f1f2e8"/><rect x="9" y="18" width="1" height="1" fill="#f7f8ee"/><rect x="10" y="18" width="1" height="1" fill="#f4f5eb"/><rect x="11" y="18" width="1" height="1" fill="#f1f2e8"/><rect x="12" y="18" width="1" height="1" fill="#f4f5eb"/><rect x="14" y="18" width="1" height="1" fill="#f1f2e8"/><rect x="15" y="18" width="1" height="1" fill="#f4f5eb"/><rect x="16" y="18" width="1" height="1" fill="#f2f3e9"/><rect x="17" y="18" width="1" height="1" fill="#f1f2e8"/><rect x="18" y="18" width="1" height="1" fill="#f3f4ea"/><rect x="20" y="18" width="1" height="1" fill="#f1f2e8"/><rect x="21" y="18" width="1" height="1" fill="#f6f7ed"/><rect x="23" y="18" width="1" height="1" fill="#f1f2e8"/><rect x="24" y="18" width="1" height="1" fill="#f9faf0"/><rect x="25" y="18" width="1" height="1" fill="#f6f7ed"/><rect x="26" y="18" width="1" height="1" fill="#f5f6ec"/><rect x="27" y="18" width="1" height="1" fill="#f7f8ee"/><rect x="28" y="18" width="1" height="1" fill="#f5f6ec"/><rect x="29" y="18" width="1" height="1" fill="#f4f5eb"/><rect x="30" y="18" width="1" height="1" fill="#f5f6ec"/><rect x="31" y="18" width="1" height="1" fill="#f1f2e8"/><rect x="33" y="18" width="1" height="1" fill="#f7f8ee"/><rect x="34" y="18" width="1" height="1" fill="#f6f7ed"/><rect x="35" y="18" width="1" height="1" fill="#f3f4ea"/><rect x="1" y="19" width="2" height="1" fill="#eaebe1"/><rect x="3" y="19" width="1" height="1" fill="#f7f8ee"/><rect x="4" y="19" width="1" height="1" fill="#f2f3e9"/><rect x="7" y="19" width="1" height="1" fill="#ebece2"/><rect x="8" y="19" width="1" height="1" fill="#e7e8de"/><rect x="9" y="19" width="1" height="1" fill="#f3f4ea"/><rect x="11" y="19" width="1" height="1" fill="#ebece2"/><rect x="13" y="19" width="1" height="1" fill="#ecede3"/><rect x="14" y="19" width="1" height="1" fill="#e7e8de"/><rect x="15" y="19" width="1" height="1" fill="#f2f3e9"/><rect x="16" y="19" width="1" height="1" fill="#ecede3"/><rect x="17" y="19" width="1" height="1" fill="#e8e9df"/><rect x="18" y="19" width="1" height="1" fill="#f2f3e9"/><rect x="19" y="19" width="1" height="1" fill="#ecede3"/><rect x="20" y="19" width="1" height="1" fill="#ebece2"/><rect x="23" y="19" width="1" height="1" fill="#e7e8de"/><rect x="24" y="19" width="1" height="1" fill="#f5f6ec"/><rect x="27" y="19" width="1" height="1" fill="#f5f6ec"/><rect x="30" y="19" width="1" height="1" fill="#f2f3e9"/><rect x="32" y="19" width="1" height="1" fill="#ebece2"/><rect x="33" y="19" width="1" height="1" fill="#f5f6ec"/><rect x="34" y="19" width="1" height="1" fill="#f1f2e8"/><rect x="35" y="19" width="1" height="1" fill="#ecede3"/><rect x="0" y="20" width="1" height="1" fill="#f1f2e8"/><rect x="1" y="20" width="1" height="1" fill="#eaebe1"/><rect x="2" y="20" width="1" height="1" fill="#e4e5db"/><rect x="3" y="20" width="1" height="1" fill="#f3f4ea"/><rect x="4" y="20" width="1" height="1" fill="#edeee4"/><rect x="5" y="20" width="1" height="1" fill="#ebece2"/><rect x="6" y="20" width="1" height="1" fill="#f2f3e9"/><rect x="7" y="20" width="1" height="1" fill="#e9eae0"/><rect x="8" y="20" width="1" height="1" fill="#e2e3d9"/><rect x="9" y="20" width="1" height="1" fill="#f6f7ed"/><rect x="10" y="20" width="1" height="1" fill="#ecede3"/><rect x="11" y="20" width="1" height="1" fill="#e5e6dc"/><rect x="13" y="20" width="1" height="1" fill="#e9eae0"/><rect x="14" y="20" width="1" height="1" fill="#e5e6dc"/><rect x="15" y="20" width="1" height="1" fill="#f3f4ea"/><rect x="16" y="20" width="1" height="1" fill="#e9eae0"/><rect x="17" y="20" width="1" height="1" fill="#e6e7dd"/><rect x="19" y="20" width="1" height="1" fill="#e9eae0"/><rect x="20" y="20" width="1" height="1" fill="#e3e4da"/><rect x="22" y="20" width="1" height="1" fill="#ecede3"/><rect x="23" y="20" width="1" height="1" fill="#e4e5db"/><rect x="24" y="20" width="1" height="1" fill="#f8f9ef"/><rect x="26" y="20" width="1" height="1" fill="#e8e9df"/><rect x="27" y="20" width="1" height="1" fill="#f6f7ed"/><rect x="28" y="20" width="1" height="1" fill="#ecede3"/><rect x="29" y="20" width="1" height="1" fill="#e8e9df"/><rect x="30" y="20" width="1" height="1" fill="#f2f3e9"/><rect x="31" y="20" width="1" height="1" fill="#eaebe1"/><rect x="32" y="20" width="1" height="1" fill="#e3e4da"/><rect x="33" y="20" width="1" height="1" fill="#f7f8ee"/><rect x="34" y="20" width="1" height="1" fill="#edeee4"/><rect x="35" y="20" width="1" height="1" fill="#e9eae0"/><rect x="0" y="21" width="1" height="1" fill="#f2f3e9"/><rect x="1" y="21" width="1" height="1" fill="#f1f2e8"/><rect x="2" y="21" width="1" height="1" fill="#f2f3e9"/><rect x="3" y="21" width="1" height="1" fill="#f6f7ed"/><rect x="4" y="21" width="1" height="1" fill="#f1f2e8"/><rect x="5" y="21" width="1" height="1" fill="#f5f6ec"/><rect x="6" y="21" width="1" height="1" fill="#f9faf0"/><rect x="7" y="21" width="1" height="1" fill="#f3f4ea"/><rect x="8" y="21" width="1" height="1" fill="#f4f5eb"/><rect x="9" y="21" width="1" height="1" fill="#f9faf0"/><rect x="11" y="21" width="1" height="1" fill="#f3f4ea"/><rect x="12" y="21" width="1" height="1" fill="#f5f6ec"/><rect x="13" y="21" width="1" height="1" fill="#f1f2e8"/><rect x="14" y="21" width="1" height="1" fill="#ecede3"/><rect x="15" y="21" width="1" height="1" fill="#fafbf1"/><rect x="16" y="21" width="1" height="1" fill="#f6f7ed"/><rect x="17" y="21" width="1" height="1" fill="#f5f6ec"/><rect x="18" y="21" width="1" height="1" fill="#f6f7ed"/><rect x="21" y="21" width="1" height="1" fill="#f5f6ec"/><rect x="22" y="21" width="2" height="1" fill="#f1f2e8"/><rect x="24" y="21" width="1" height="1" fill="#f8f9ef"/><rect x="25" y="21" width="1" height="1" fill="#f1f2e8"/><rect x="26" y="21" width="1" height="1" fill="#f5f6ec"/><rect x="27" y="21" width="1" height="1" fill="#f6f7ed"/><rect x="28" y="21" width="1" height="1" fill="#f1f2e8"/><rect x="30" y="21" width="1" height="1" fill="#f6f7ed"/><rect x="32" y="21" width="1" height="1" fill="#f1f2e8"/><rect x="33" y="21" width="1" height="1" fill="#f2f3e9"/><rect x="35" y="21" width="1" height="1" fill="#edeee4"/><rect x="1" y="22" width="1" height="1" fill="#ebece2"/><rect x="2" y="22" width="1" height="1" fill="#eaebe1"/><rect x="3" y="22" width="1" height="1" fill="#f2f3e9"/><rect x="6" y="22" width="1" height="1" fill="#f7f8ee"/><rect x="7" y="22" width="1" height="1" fill="#f3f4ea"/><rect x="8" y="22" width="1" height="1" fill="#ecede3"/><rect x="9" y="22" width="1" height="1" fill="#f3f4ea"/><rect x="10" y="22" width="1" height="1" fill="#f1f2e8"/><rect x="11" y="22" width="1" height="1" fill="#eaebe1"/><rect x="12" y="22" width="1" height="1" fill="#f2f3e9"/><rect x="13" y="22" width="1" height="1" fill="#edeee4"/><rect x="14" y="22" width="1" height="1" fill="#e9eae0"/><rect x="15" y="22" width="1" height="1" fill="#f7f8ee"/><rect x="16" y="22" width="1" height="1" fill="#f1f2e8"/><rect x="17" y="22" width="1" height="1" fill="#edeee4"/><rect x="19" y="22" width="1" height="1" fill="#ecede3"/><rect x="20" y="22" width="1" height="1" fill="#e9eae0"/><rect x="22" y="22" width="1" height="1" fill="#f1f2e8"/><rect x="23" y="22" width="1" height="1" fill="#ebece2"/><rect x="24" y="22" width="1" height="1" fill="#f4f5eb"/><rect x="27" y="22" width="1" height="1" fill="#f3f4ea"/><rect x="28" y="22" width="1" height="1" fill="#ecede3"/><rect x="29" y="22" width="1" height="1" fill="#ebece2"/><rect x="30" y="22" width="1" height="1" fill="#f2f3e9"/><rect x="31" y="22" width="1" height="1" fill="#edeee4"/><rect x="32" y="22" width="1" height="1" fill="#ebece2"/><rect x="34" y="22" width="1" height="1" fill="#ecede3"/><rect x="35" y="22" width="1" height="1" fill="#e7e8de"/><rect x="0" y="23" width="1" height="1" fill="#f2f3e9"/><rect x="1" y="23" width="1" height="1" fill="#e8e9df"/><rect x="2" y="23" width="1" height="1" fill="#e5e6dc"/><rect x="3" y="23" width="1" height="1" fill="#f2f3e9"/><rect x="5" y="23" width="1" height="1" fill="#e6e7dd"/><rect x="6" y="23" width="1" height="1" fill="#f7f8ee"/><rect x="8" y="23" width="1" height="1" fill="#eaebe1"/><rect x="9" y="23" width="1" height="1" fill="#f4f5eb"/><rect x="10" y="23" width="1" height="1" fill="#ecede3"/><rect x="11" y="23" width="1" height="1" fill="#e5e6dc"/><rect x="12" y="23" width="1" height="1" fill="#f2f3e9"/><rect x="13" y="23" width="1" height="1" fill="#e9eae0"/><rect x="14" y="23" width="1" height="1" fill="#e3e4da"/><rect x="15" y="23" width="1" height="1" fill="#f7f8ee"/><rect x="17" y="23" width="1" height="1" fill="#e9eae0"/><rect x="19" y="23" width="1" height="1" fill="#e7e8de"/><rect x="20" y="23" width="1" height="1" fill="#e5e6dc"/><rect x="21" y="23" width="1" height="1" fill="#f2f3e9"/><rect x="22" y="23" width="1" height="1" fill="#ecede3"/><rect x="23" y="23" width="1" height="1" fill="#e4e5db"/><rect x="24" y="23" width="1" height="1" fill="#f3f4ea"/><rect x="26" y="23" width="1" height="1" fill="#e7e8de"/><rect x="27" y="23" width="1" height="1" fill="#f2f3e9"/><rect x="28" y="23" width="1" height="1" fill="#e9eae0"/><rect x="29" y="23" width="1" height="1" fill="#e3e4da"/><rect x="30" y="23" width="1" height="1" fill="#f4f5eb"/><rect x="31" y="23" width="1" height="1" fill="#ecede3"/><rect x="32" y="23" width="1" height="1" fill="#e2e3d9"/><rect x="34" y="23" width="1" height="1" fill="#e7e8de"/><rect x="35" y="23" width="1" height="1" fill="#e5e6dc"/><rect x="0" y="24" width="1" height="1" fill="#f4f5eb"/><rect x="1" y="24" width="1" height="1" fill="#f1f2e8"/><rect x="3" y="24" width="1" height="1" fill="#f7f8ee"/><rect x="4" y="24" width="1" height="1" fill="#f6f7ed"/><rect x="5" y="24" width="1" height="1" fill="#f5f6ec"/><rect x="6" y="24" width="1" height="1" fill="#f4f5eb"/><rect x="9" y="24" width="1" height="1" fill="#f7f8ee"/><rect x="10" y="24" width="2" height="1" fill="#f1f2e8"/><rect x="12" y="24" width="1" height="1" fill="#f7f8ee"/><rect x="15" y="24" width="1" height="1" fill="#f5f6ec"/><rect x="16" y="24" width="2" height="1" fill="#f3f4ea"/><rect x="18" y="24" width="1" height="1" fill="#fafbf1"/><rect x="19" y="24" width="1" height="1" fill="#f3f4ea"/><rect x="20" y="24" width="1" height="1" fill="#f4f5eb"/><rect x="21" y="24" width="1" height="1" fill="#f8f9ef"/><rect x="22" y="24" width="1" height="1" fill="#f4f5eb"/><rect x="23" y="24" width="1" height="1" fill="#f3f4ea"/><rect x="24" y="24" width="1" height="1" fill="#f9faf0"/><rect x="25" y="24" width="1" height="1" fill="#f3f4ea"/><rect x="26" y="24" width="1" height="1" fill="#f4f5eb"/><rect x="27" y="24" width="1" height="1" fill="#f9faf0"/><rect x="28" y="24" width="1" height="1" fill="#f2f3e9"/><rect x="29" y="24" width="1" height="1" fill="#f5f6ec"/><rect x="30" y="24" width="1" height="1" fill="#f7f8ee"/><rect x="33" y="24" width="1" height="1" fill="#f6f7ed"/><rect x="34" y="24" width="2" height="1" fill="#f1f2e8"/><rect x="1" y="25" width="1" height="1" fill="#ebece2"/><rect x="2" y="25" width="1" height="1" fill="#e4e5db"/><rect x="3" y="25" width="1" height="1" fill="#f1f2e8"/><rect x="5" y="25" width="1" height="1" fill="#edeee4"/><rect x="7" y="25" width="1" height="1" fill="#eaebe1"/><rect x="8" y="25" width="1" height="1" fill="#e7e8de"/><rect x="9" y="25" width="1" height="1" fill="#f1f2e8"/><rect x="10" y="25" width="1" height="1" fill="#ebece2"/><rect x="11" y="25" width="1" height="1" fill="#eaebe1"/><rect x="13" y="25" width="1" height="1" fill="#eaebe1"/><rect x="14" y="25" width="1" height="1" fill="#e6e7dd"/><rect x="16" y="25" width="1" height="1" fill="#e9eae0"/><rect x="17" y="25" width="1" height="1" fill="#e8e9df"/><rect x="18" y="25" width="1" height="1" fill="#f2f3e9"/><rect x="19" y="25" width="2" height="1" fill="#edeee4"/><rect x="23" y="25" width="1" height="1" fill="#e7e8de"/><rect x="24" y="25" width="1" height="1" fill="#f2f3e9"/><rect x="25" y="25" width="1" height="1" fill="#edeee4"/><rect x="26" y="25" width="1" height="1" fill="#e9eae0"/><rect x="27" y="25" width="1" height="1" fill="#f1f2e8"/><rect x="29" y="25" width="1" height="1" fill="#eaebe1"/><rect x="30" y="25" width="1" height="1" fill="#edeee4"/><rect x="31" y="25" width="1" height="1" fill="#e9eae0"/><rect x="32" y="25" width="1" height="1" fill="#e7e8de"/><rect x="34" y="25" width="1" height="1" fill="#e8e9df"/><rect x="35" y="25" width="1" height="1" fill="#e4e5db"/><rect x="1" y="26" width="1" height="1" fill="#e9eae0"/><rect x="2" y="26" width="1" height="1" fill="#e5e6dc"/><rect x="3" y="26" width="1" height="1" fill="#f2f3e9"/><rect x="5" y="26" width="1" height="1" fill="#e9eae0"/><rect x="6" y="26" width="1" height="1" fill="#f3f4ea"/><rect x="7" y="26" width="1" height="1" fill="#e8e9df"/><rect x="8" y="26" width="1" height="1" fill="#e3e4da"/><rect x="9" y="26" width="1" height="1" fill="#f3f4ea"/><rect x="10" y="26" width="1" height="1" fill="#edeee4"/><rect x="11" y="26" width="1" height="1" fill="#e8e9df"/><rect x="12" y="26" width="1" height="1" fill="#f4f5eb"/><rect x="13" y="26" width="1" height="1" fill="#e9eae0"/><rect x="14" y="26" width="1" height="1" fill="#e4e5db"/><rect x="15" y="26" width="1" height="1" fill="#f2f3e9"/><rect x="16" y="26" width="1" height="1" fill="#ebece2"/><rect x="17" y="26" width="1" height="1" fill="#e4e5db"/><rect x="18" y="26" width="1" height="1" fill="#f7f8ee"/><rect x="20" y="26" width="1" height="1" fill="#e9eae0"/><rect x="21" y="26" width="1" height="1" fill="#f2f3e9"/><rect x="22" y="26" width="1" height="1" fill="#ecede3"/><rect x="23" y="26" width="1" height="1" fill="#e6e7dd"/><rect x="24" y="26" width="1" height="1" fill="#f5f6ec"/><rect x="25" y="26" width="1" height="1" fill="#eaebe1"/><rect x="26" y="26" width="1" height="1" fill="#e7e8de"/><rect x="27" y="26" width="1" height="1" fill="#f8f9ef"/><rect x="29" y="26" width="1" height="1" fill="#eaebe1"/><rect x="30" y="26" width="1" height="1" fill="#f3f4ea"/><rect x="31" y="26" width="1" height="1" fill="#e8e9df"/><rect x="32" y="26" width="1" height="1" fill="#e2e3d9"/><rect x="33" y="26" width="1" height="1" fill="#f3f4ea"/><rect x="34" y="26" width="1" height="1" fill="#e8e9df"/><rect x="35" y="26" width="1" height="1" fill="#e1e2d8"/><rect x="0" y="27" width="1" height="1" fill="#fafbf1"/><rect x="1" y="27" width="1" height="1" fill="#f4f5eb"/><rect x="2" y="27" width="1" height="1" fill="#f3f4ea"/><rect x="3" y="27" width="1" height="1" fill="#fbfcf2"/><rect x="4" y="27" width="1" height="1" fill="#f6f7ed"/><rect x="5" y="27" width="1" height="1" fill="#f8f9ef"/><rect x="6" y="27" width="1" height="1" fill="#f4f5eb"/><rect x="8" y="27" width="1" height="1" fill="#f2f3e9"/><rect x="9" y="27" width="1" height="1" fill="#f4f5eb"/><rect x="10" y="27" width="1" height="1" fill="#f1f2e8"/><rect x="12" y="27" width="1" height="1" fill="#f9faf0"/><rect x="13" y="27" width="1" height="1" fill="#f1f2e8"/><rect x="14" y="27" width="1" height="1" fill="#f2f3e9"/><rect x="15" y="27" width="1" height="1" fill="#fafbf1"/><rect x="16" y="27" width="3" height="1" fill="#f6f7ed"/><rect x="19" y="27" width="1" height="1" fill="#f1f2e8"/><rect x="20" y="27" width="1" height="1" fill="#f2f3e9"/><rect x="21" y="27" width="1" height="1" fill="#f8f9ef"/><rect x="22" y="27" width="1" height="1" fill="#f5f6ec"/><rect x="23" y="27" width="1" height="1" fill="#f3f4ea"/><rect x="24" y="27" width="1" height="1" fill="#f9faf0"/><rect x="25" y="27" width="1" height="1" fill="#f3f4ea"/><rect x="26" y="27" width="1" height="1" fill="#f2f3e9"/><rect x="27" y="27" width="1" height="1" fill="#f5f6ec"/><rect x="28" y="27" width="2" height="1" fill="#f1f2e8"/><rect x="30" y="27" width="1" height="1" fill="#f5f6ec"/><rect x="31" y="27" width="1" height="1" fill="#f1f2e8"/><rect x="32" y="27" width="1" height="1" fill="#f2f3e9"/><rect x="33" y="27" width="1" height="1" fill="#f6f7ed"/><rect x="35" y="27" width="1" height="1" fill="#f1f2e8"/><rect x="0" y="28" width="1" height="1" fill="#f5f6ec"/><rect x="2" y="28" width="1" height="1" fill="#edeee4"/><rect x="3" y="28" width="1" height="1" fill="#f7f8ee"/><rect x="4" y="28" width="1" height="1" fill="#f4f5eb"/><rect x="6" y="28" width="1" height="1" fill="#f1f2e8"/><rect x="7" y="28" width="1" height="1" fill="#eaebe1"/><rect x="8" y="28" width="1" height="1" fill="#e8e9df"/><rect x="10" y="28" width="1" height="1" fill="#ebece2"/><rect x="11" y="28" width="1" height="1" fill="#e7e8de"/><rect x="12" y="28" width="1" height="1" fill="#f6f7ed"/><rect x="13" y="28" width="1" height="1" fill="#f1f2e8"/><rect x="14" y="28" width="1" height="1" fill="#ecede3"/><rect x="15" y="28" width="1" height="1" fill="#f6f7ed"/><rect x="18" y="28" width="1" height="1" fill="#f4f5eb"/><rect x="19" y="28" width="1" height="1" fill="#edeee4"/><rect x="20" y="28" width="1" height="1" fill="#eaebe1"/><rect x="21" y="28" width="1" height="1" fill="#f6f7ed"/><rect x="22" y="28" width="1" height="1" fill="#f4f5eb"/><rect x="23" y="28" width="1" height="1" fill="#edeee4"/><rect x="24" y="28" width="1" height="1" fill="#f8f9ef"/><rect x="25" y="28" width="1" height="1" fill="#f1f2e8"/><rect x="27" y="28" width="1" height="1" fill="#f4f5eb"/><rect x="28" y="28" width="1" height="1" fill="#edeee4"/><rect x="29" y="28" width="1" height="1" fill="#eaebe1"/><rect x="30" y="28" width="1" height="1" fill="#f3f4ea"/><rect x="32" y="28" width="1" height="1" fill="#ebece2"/><rect x="34" y="28" width="1" height="1" fill="#ecede3"/><rect x="35" y="28" width="1" height="1" fill="#e9eae0"/><rect x="0" y="29" width="1" height="1" fill="#f8f9ef"/><rect x="2" y="29" width="1" height="1" fill="#e6e7dd"/><rect x="3" y="29" width="1" height="1" fill="#f8f9ef"/><rect x="4" y="29" width="1" height="1" fill="#edeee4"/><rect x="5" y="29" width="1" height="1" fill="#e9eae0"/><rect x="6" y="29" width="1" height="1" fill="#f4f5eb"/><rect x="7" y="29" width="1" height="1" fill="#eaebe1"/><rect x="8" y="29" width="1" height="1" fill="#e5e6dc"/><rect x="9" y="29" width="1" height="1" fill="#f1f2e8"/><rect x="10" y="29" width="1" height="1" fill="#e8e9df"/><rect x="11" y="29" width="1" height="1" fill="#e2e3d9"/><rect x="12" y="29" width="1" height="1" fill="#f6f7ed"/><rect x="13" y="29" width="1" height="1" fill="#ecede3"/><rect x="14" y="29" width="1" height="1" fill="#e5e6dc"/><rect x="15" y="29" width="1" height="1" fill="#f5f6ec"/><rect x="16" y="29" width="1" height="1" fill="#ecede3"/><rect x="17" y="29" width="1" height="1" fill="#eaebe1"/><rect x="19" y="29" width="1" height="1" fill="#e7e8de"/><rect x="20" y="29" width="1" height="1" fill="#e4e5db"/><rect x="21" y="29" width="1" height="1" fill="#f5f6ec"/><rect x="22" y="29" width="1" height="1" fill="#f2f3e9"/><rect x="23" y="29" width="1" height="1" fill="#e9eae0"/><rect x="24" y="29" width="1" height="1" fill="#f6f7ed"/><rect x="25" y="29" width="1" height="1" fill="#edeee4"/><rect x="26" y="29" width="1" height="1" fill="#e7e8de"/><rect x="27" y="29" width="1" height="1" fill="#f4f5eb"/><rect x="28" y="29" width="1" height="1" fill="#ecede3"/><rect x="29" y="29" width="1" height="1" fill="#e4e5db"/><rect x="30" y="29" width="1" height="1" fill="#f1f2e8"/><rect x="31" y="29" width="1" height="1" fill="#ebece2"/><rect x="32" y="29" width="1" height="1" fill="#e6e7dd"/><rect x="33" y="29" width="1" height="1" fill="#f1f2e8"/><rect x="34" y="29" width="1" height="1" fill="#e7e8de"/><rect x="35" y="29" width="1" height="1" fill="#e2e3d9"/><rect x="0" y="30" width="1" height="1" fill="#f4f5eb"/><rect x="1" y="30" width="1" height="1" fill="#edeee4"/><rect x="3" y="30" width="1" height="1" fill="#fbfcf2"/><rect x="4" y="30" width="1" height="1" fill="#f8f9ef"/><rect x="5" y="30" width="2" height="1" fill="#f7f8ee"/><rect x="9" y="30" width="1" height="1" fill="#f7f8ee"/><rect x="10" y="30" width="1" height="1" fill="#f1f2e8"/><rect x="11" y="30" width="1" height="1" fill="#f3f4ea"/><rect x="12" y="30" width="1" height="1" fill="#f6f7ed"/><rect x="15" y="30" width="1" height="1" fill="#fafbf1"/><rect x="16" y="30" width="1" height="1" fill="#f5f6ec"/><rect x="17" y="30" width="1" height="1" fill="#f3f4ea"/><rect x="18" y="30" width="1" height="1" fill="#f7f8ee"/><rect x="20" y="30" width="1" height="1" fill="#f2f3e9"/><rect x="21" y="30" width="1" height="1" fill="#f3f4ea"/><rect x="22" y="30" width="1" height="1" fill="#f2f3e9"/><rect x="23" y="30" width="1" height="1" fill="#f1f2e8"/><rect x="24" y="30" width="1" height="1" fill="#f5f6ec"/><rect x="26" y="30" width="1" height="1" fill="#f1f2e8"/><rect x="27" y="30" width="1" height="1" fill="#f9faf0"/><rect x="28" y="30" width="1" height="1" fill="#f5f6ec"/><rect x="29" y="30" width="1" height="1" fill="#f3f4ea"/><rect x="30" y="30" width="1" height="1" fill="#f4f5eb"/><rect x="32" y="30" width="1" height="1" fill="#ecede3"/><rect x="33" y="30" width="1" height="1" fill="#f3f4ea"/><rect x="0" y="31" width="1" height="1" fill="#f2f3e9"/><rect x="1" y="31" width="1" height="1" fill="#ecede3"/><rect x="2" y="31" width="1" height="1" fill="#e9eae0"/><rect x="3" y="31" width="1" height="1" fill="#f8f9ef"/><rect x="4" y="31" width="1" height="1" fill="#f2f3e9"/><rect x="5" y="31" width="1" height="1" fill="#f1f2e8"/><rect x="6" y="31" width="1" height="1" fill="#f2f3e9"/><rect x="7" y="31" width="1" height="1" fill="#ecede3"/><rect x="8" y="31" width="1" height="1" fill="#eaebe1"/><rect x="9" y="31" width="1" height="1" fill="#f6f7ed"/><rect x="11" y="31" width="1" height="1" fill="#edeee4"/><rect x="12" y="31" width="1" height="1" fill="#f3f4ea"/><rect x="13" y="31" width="1" height="1" fill="#ecede3"/><rect x="14" y="31" width="1" height="1" fill="#ebece2"/><rect x="15" y="31" width="1" height="1" fill="#f5f6ec"/><rect x="16" y="31" width="1" height="1" fill="#f2f3e9"/><rect x="18" y="31" width="1" height="1" fill="#f4f5eb"/><rect x="19" y="31" width="1" height="1" fill="#f1f2e8"/><rect x="20" y="31" width="1" height="1" fill="#ebece2"/><rect x="21" y="31" width="1" height="1" fill="#f1f2e8"/><rect x="23" y="31" width="1" height="1" fill="#e9eae0"/><rect x="24" y="31" width="1" height="1" fill="#f3f4ea"/><rect x="25" y="31" width="1" height="1" fill="#eaebe1"/><rect x="26" y="31" width="1" height="1" fill="#e9eae0"/><rect x="27" y="31" width="1" height="1" fill="#f5f6ec"/><rect x="29" y="31" width="1" height="1" fill="#edeee4"/><rect x="30" y="31" width="1" height="1" fill="#f1f2e8"/><rect x="31" y="31" width="1" height="1" fill="#ebece2"/><rect x="32" y="31" width="1" height="1" fill="#eaebe1"/><rect x="34" y="31" width="1" height="1" fill="#edeee4"/><rect x="35" y="31" width="1" height="1" fill="#e8e9df"/><rect x="1" y="32" width="1" height="1" fill="#e7e8de"/><rect x="2" y="32" width="1" height="1" fill="#e3e4da"/><rect x="3" y="32" width="1" height="1" fill="#f8f9ef"/><rect x="5" y="32" width="1" height="1" fill="#ebece2"/><rect x="6" y="32" width="1" height="1" fill="#f3f4ea"/><rect x="7" y="32" width="1" height="1" fill="#e8e9df"/><rect x="8" y="32" width="1" height="1" fill="#e3e4da"/><rect x="9" y="32" width="1" height="1" fill="#f7f8ee"/><rect x="10" y="32" width="1" height="1" fill="#eaebe1"/><rect x="11" y="32" width="1" height="1" fill="#e7e8de"/><rect x="12" y="32" width="1" height="1" fill="#f3f4ea"/><rect x="13" y="32" width="1" height="1" fill="#eaebe1"/><rect x="14" y="32" width="1" height="1" fill="#e2e3d9"/><rect x="15" y="32" width="1" height="1" fill="#f8f9ef"/><rect x="16" y="32" width="1" height="1" fill="#ebece2"/><rect x="17" y="32" width="1" height="1" fill="#e5e6dc"/><rect x="18" y="32" width="1" height="1" fill="#f4f5eb"/><rect x="19" y="32" width="1" height="1" fill="#e9eae0"/><rect x="20" y="32" width="1" height="1" fill="#e5e6dc"/><rect x="21" y="32" width="1" height="1" fill="#f3f4ea"/><rect x="22" y="32" width="1" height="1" fill="#ecede3"/><rect x="23" y="32" width="1" height="1" fill="#e4e5db"/><rect x="24" y="32" width="1" height="1" fill="#f3f4ea"/><rect x="25" y="32" width="1" height="1" fill="#e7e8de"/><rect x="26" y="32" width="1" height="1" fill="#e6e7dd"/><rect x="27" y="32" width="1" height="1" fill="#f5f6ec"/><rect x="28" y="32" width="1" height="1" fill="#edeee4"/><rect x="29" y="32" width="1" height="1" fill="#e5e6dc"/><rect x="30" y="32" width="1" height="1" fill="#f2f3e9"/><rect x="31" y="32" width="1" height="1" fill="#e7e8de"/><rect x="32" y="32" width="1" height="1" fill="#e2e3d9"/><rect x="33" y="32" width="1" height="1" fill="#f2f3e9"/><rect x="34" y="32" width="1" height="1" fill="#e8e9df"/><rect x="35" y="32" width="1" height="1" fill="#e6e7dd"/><rect x="0" y="33" width="1" height="1" fill="#f9faf0"/><rect x="1" y="33" width="1" height="1" fill="#f1f2e8"/><rect x="3" y="33" width="2" height="1" fill="#f8f9ef"/><rect x="5" y="33" width="1" height="1" fill="#f5f6ec"/><rect x="6" y="33" width="1" height="1" fill="#f7f8ee"/><rect x="7" y="33" width="1" height="1" fill="#f1f2e8"/><rect x="8" y="33" width="1" height="1" fill="#f2f3e9"/><rect x="9" y="33" width="1" height="1" fill="#f7f8ee"/><rect x="12" y="33" width="1" height="1" fill="#fafbf1"/><rect x="13" y="33" width="1" height="1" fill="#f5f6ec"/><rect x="14" y="33" width="2" height="1" fill="#f3f4ea"/><rect x="17" y="33" width="1" height="1" fill="#f1f2e8"/><rect x="18" y="33" width="1" height="1" fill="#f3f4ea"/><rect x="19" y="33" width="1" height="1" fill="#ecede3"/><rect x="21" y="33" width="1" height="1" fill="#f4f5eb"/><rect x="22" y="33" width="1" height="1" fill="#f2f3e9"/><rect x="24" y="33" width="1" height="1" fill="#f5f6ec"/><rect x="27" y="33" width="1" height="1" fill="#f4f5eb"/><rect x="28" y="33" width="1" height="1" fill="#edeee4"/><rect x="29" y="33" width="1" height="1" fill="#f1f2e8"/><rect x="30" y="33" width="1" height="1" fill="#f6f7ed"/><rect x="33" y="33" width="1" height="1" fill="#f8f9ef"/><rect x="34" y="33" width="1" height="1" fill="#f3f4ea"/><rect x="0" y="34" width="1" height="1" fill="#f2f3e9"/><rect x="1" y="34" width="1" height="1" fill="#edeee4"/><rect x="2" y="34" width="1" height="1" fill="#eaebe1"/><rect x="3" y="34" width="1" height="1" fill="#f7f8ee"/><rect x="4" y="34" width="1" height="1" fill="#f5f6ec"/><rect x="6" y="34" width="1" height="1" fill="#f4f5eb"/><rect x="8" y="34" width="1" height="1" fill="#edeee4"/><rect x="9" y="34" width="1" height="1" fill="#f2f3e9"/><rect x="10" y="34" width="1" height="1" fill="#edeee4"/><rect x="11" y="34" width="1" height="1" fill="#e9eae0"/><rect x="12" y="34" width="1" height="1" fill="#f6f7ed"/><rect x="14" y="34" width="1" height="1" fill="#ecede3"/><rect x="15" y="34" width="1" height="1" fill="#f3f4ea"/><rect x="16" y="34" width="1" height="1" fill="#ecede3"/><rect x="17" y="34" width="1" height="1" fill="#eaebe1"/><rect x="19" y="34" width="1" height="1" fill="#ecede3"/><rect x="20" y="34" width="1" height="1" fill="#e6e7dd"/><rect x="21" y="34" width="1" height="1" fill="#f3f4ea"/><rect x="22" y="34" width="1" height="1" fill="#f1f2e8"/><rect x="23" y="34" width="1" height="1" fill="#e7e8de"/><rect x="24" y="34" width="1" height="1" fill="#f3f4ea"/><rect x="25" y="34" width="1" height="1" fill="#ebece2"/><rect x="26" y="34" width="1" height="1" fill="#ecede3"/><rect x="28" y="34" width="1" height="1" fill="#e9eae0"/><rect x="29" y="34" width="1" height="1" fill="#eaebe1"/><rect x="30" y="34" width="1" height="1" fill="#f3f4ea"/><rect x="31" y="34" width="1" height="1" fill="#ebece2"/><rect x="32" y="34" width="1" height="1" fill="#eaebe1"/><rect x="35" y="34" width="1" height="1" fill="#e9eae0"/><rect x="0" y="35" width="1" height="1" fill="#f1f2e8"/><rect x="1" y="35" width="1" height="1" fill="#eaebe1"/><rect x="2" y="35" width="1" height="1" fill="#e6e7dd"/><rect x="3" y="35" width="1" height="1" fill="#f3f4ea"/><rect x="4" y="35" width="1" height="1" fill="#f1f2e8"/><rect x="5" y="35" width="1" height="1" fill="#eaebe1"/><rect x="6" y="35" width="1" height="1" fill="#f4f5eb"/><rect x="8" y="35" width="1" height="1" fill="#e8e9df"/><rect x="9" y="35" width="1" height="1" fill="#f3f4ea"/><rect x="10" y="35" width="1" height="1" fill="#eaebe1"/><rect x="11" y="35" width="1" height="1" fill="#e6e7dd"/><rect x="12" y="35" width="1" height="1" fill="#f7f8ee"/><rect x="14" y="35" width="1" height="1" fill="#eaebe1"/><rect x="16" y="35" width="1" height="1" fill="#ebece2"/><rect x="17" y="35" width="1" height="1" fill="#e2e3d9"/><rect x="19" y="35" width="1" height="1" fill="#e8e9df"/><rect x="20" y="35" width="1" height="1" fill="#e3e4da"/><rect x="21" y="35" width="1" height="1" fill="#f2f3e9"/><rect x="22" y="35" width="1" height="1" fill="#edeee4"/><rect x="23" y="35" width="1" height="1" fill="#e2e3d9"/><rect x="24" y="35" width="1" height="1" fill="#f1f2e8"/><rect x="25" y="35" width="1" height="1" fill="#e9eae0"/><rect x="26" y="35" width="1" height="1" fill="#e5e6dc"/><rect x="28" y="35" width="1" height="1" fill="#e8e9df"/><rect x="29" y="35" width="1" height="1" fill="#e2e3d9"/><rect x="31" y="35" width="1" height="1" fill="#eaebe1"/><rect x="32" y="35" width="1" height="1" fill="#e3e4da"/><rect x="33" y="35" width="1" height="1" fill="#f2f3e9"/><rect x="34" y="35" width="1" height="1" fill="#e9eae0"/><rect x="35" y="35" width="1" height="1" fill="#e6e7dd"/></pattern></defs><rect width="925" height="655" fill="url(#wv)"/></svg></div>
 <div class="gb" style="left:38px;top:35px;width:863px;height:392px"></div>
 <div class="lbl" style="left:109px;top:44px;">Domeniul de activitate</div>
 <div class="tx" style="left:46px;top:79px;width:54px;height:19px;line-height:17.6px;">3100</div>
 <div class="lb" style="left:108px;top:60.3px;width:224px;height:79.4px" id="lb"><div class="li" style="top:1.2px">AFEE TARGOVISTE</div><div class="li" style="top:13.4px">SDEE BRAILA</div><div class="li" style="top:26.2px">SDEE BUZAU</div><div class="li" style="top:38.7px">SDEE FOCSANI</div><div class="li" style="top:51.7px">SDEE GALATI</div><div class="li sel" style="top:64.2px;height:12.6px;line-height:12.6px">SDEE PLOIESTI</div><div id="lsb" class="sbt" style="left:204.6px;top:.8px;width:16px;height:76.6px"><div class="sbb" style="top:0;height:16px"><svg width="10" height="7" viewBox="0 0 10 7"><path d="M1.2 5.6L5 1.8L8.8 5.6" fill="none" stroke="#4d6185" stroke-width="2"/></svg></div><div class="sbh" style="top:37.6px;height:18.5px"><div style="left:4px;top:5px;width:7px;height:7px;background:repeating-linear-gradient(#eef4fe 0,#eef4fe 1px,#8cb0f8 1px,#8cb0f8 2px)"></div></div><div class="sbb" style="top:60px;height:16px"><svg width="10" height="7" viewBox="0 0 10 7"><path d="M1.2 1.4L5 5.2L8.8 1.4" fill="none" stroke="#4d6185" stroke-width="2"/></svg></div></div></div>
 <div class="lbl" style="left:55.5px;top:179px;">Categorie&nbsp; partener</div>
 <div class="gb2" style="left:153px;top:172px;width:227px;height:27px"></div>
 <div class="rd" style="left:167px;top:180px"></div>
 <div class="lbl" style="left:183px;top:179px;">Furnizor</div>
 <div class="rd on" style="left:260px;top:180px"></div>
 <div class="lbl" style="left:276px;top:179px;">Consumator eligibil</div>
 <div class="lbl" style="left:57px;top:212px;">Cod partener</div>
 <div class="tx" style="left:154px;top:214px;width:98px;height:19px;line-height:17.6px;">B61E</div>
 <div class="lbl" style="left:57px;top:245px;">Denumire partener</div>
 <div class="tx" style="left:154px;top:245px;width:378px;height:19px;line-height:17.6px;letter-spacing:-.4px">SC LAFARGE AGREGATE BETOANE SA</div>
 <div class="lbl" style="left:57px;top:279px;line-height:11.5px">Denumire afisata<br>partener</div>
 <div class="tx" style="left:154px;top:276px;width:378px;height:19px;line-height:17.6px;letter-spacing:-.4px">LAFARGE AGREGATE BETOANE SA</div>
 <div class="lbl" style="left:57px;top:311px;">Localitatea</div>
 <div class="tx" style="left:154px;top:307px;width:378px;height:19px;line-height:17.6px;letter-spacing:-.4px">BUCURESTI SECTOR 1</div>
 <div class="lbl" style="left:57px;top:338px;">Strada</div>
 <div class="tx" style="left:154px;top:339px;width:378px;height:19px;line-height:17.6px;letter-spacing:-.4px">MODROGAN</div>
 <div class="lbl" style="left:57px;top:370px;">Numar</div>
 <div class="tx" style="left:154px;top:370px;width:168px;height:19px;line-height:17.6px;letter-spacing:-.4px">20,ETAJ 3</div>
 <div class="lbl" style="left:57px;top:401px;">Cod postal</div>
 <div class="tx" style="left:154px;top:401px;width:98px;height:19px;line-height:17.6px;"></div>
 <div class="lbl" style="left:545px;top:49.5px;">Judet</div>
 <div class="tx" style="left:640px;top:52.5px;width:224px;height:20px;background:#ece9d8;border-color:#c9c7ba"></div>
 <svg style="left:848px;top:59px" width="10" height="8" viewBox="0 0 10 8"><path d="M1 1.5L5 5.5L9 1.5" fill="none" stroke="#c9c7ba" stroke-width="2"/></svg>
 <div class="lbl" style="left:545px;top:76.5px;line-height:13px;letter-spacing:0">Telefon</div>
 <div class="tx" style="left:640px;top:76px;width:224px;height:19px;line-height:17.6px;"></div>
 <div class="lbl" style="left:545px;top:104px;line-height:13px">Fax</div>
 <div class="tx" style="left:640px;top:99px;width:224px;height:19px;line-height:17.6px;"></div>
 <div class="lbl" style="left:545px;top:123.2px;line-height:13px">C.U.I.</div>
 <div class="tx" style="left:640px;top:122px;width:224px;height:19px;line-height:17.6px;"></div>
 <div class="lbl" style="left:545px;top:145.8px;line-height:13px">C.I.F.</div>
 <div class="tx" style="left:640px;top:145px;width:224px;height:19px;line-height:17.6px;"></div>
 <div class="lbl" style="left:545px;top:166px;line-height:13px">Numar registru<br>comercial</div>
 <div class="tx" style="left:640px;top:170px;width:224px;height:19px;line-height:17.6px;"></div>
 <div class="lbl" style="left:545px;top:194.8px;line-height:13px">Banca</div>
 <div class="tx" style="left:640px;top:193px;width:224px;height:19px;line-height:17.6px;"></div>
 <div class="lbl" style="left:545px;top:218px;line-height:13px">Cont IBAN</div>
 <div class="tx" style="left:640px;top:216px;width:224px;height:19px;line-height:17.6px;"></div>
 <div class="lbl" style="left:545px;top:240px;line-height:13px;letter-spacing:0">Adresa email</div>
 <div class="tx" style="left:640px;top:239.6px;width:224px;height:19px;line-height:17.6px;"></div>
 <div class="lbl" style="left:545px;top:267px;line-height:13px;letter-spacing:0">Director general</div>
 <div class="tx" style="left:640px;top:265px;width:224px;height:19px;line-height:17.6px;"></div>
 <div class="lbl" style="left:545px;top:291px;line-height:13px;letter-spacing:0">Director economic</div>
 <div class="tx" style="left:640px;top:288px;width:224px;height:19px;line-height:17.6px;"></div>
 <div class="lbl" style="left:545px;top:317px;letter-spacing:-.05px">Stare furnizor / consumator</div>
 <div class="rd on" style="left:691px;top:319px"></div>
 <div class="lbl" style="left:707px;top:319px;">Activ</div>
 <div class="rd" style="left:774px;top:319px"></div>
 <div class="lbl" style="left:789px;top:319px;">Blocat</div>
 <div class="gb2" style="left:547px;top:347px;width:319px;height:72px"></div>
 <div class="lbl" style="left:554px;top:340px;padding:0 2px;color:#b9b8ab;font-size:10.1px;letter-spacing:0;top:340.6px">Informatii despre furnizori pentru export spre SAP</div>
 <div class="lbl" style="left:565px;top:363px">Cod partener in SAP</div>
 <div class="tx" style="left:683px;top:360px;width:152px;height:19px;line-height:17.6px;"></div>
 <div class="lbl" style="left:565px;top:394px">Cont contract SAP</div>
 <div class="tx" style="left:683px;top:391px;width:152px;height:19px;line-height:17.6px;"></div>
 <div id="alte" style="left:447.3px;top:77px;width:70.7px;height:59.5px;border:1px solid #cfcec0;border-radius:3px;background:rgba(250,250,246,.55)"><svg style="left:0;top:0" width="70" height="40" viewBox="0 0 70 40"><g stroke="#6c6c6c" stroke-width="1.1" stroke-linejoin="round">
<path d="M19 26.6L33.5 20.2L38.5 24.4L24.5 32.2C21.5 33.4 18 31.6 18 28.6Z" fill="#e2e2e2"/>
<ellipse cx="21.8" cy="29.4" rx="3.1" ry="2.9" fill="#ececec"/><ellipse cx="21.8" cy="29.6" rx="1.2" ry="1.1" fill="#bdbdbd"/>
<path d="M25 27.4L33 23.6M26 29.6L35 25.2" fill="none" stroke="#9a9a9a" stroke-width=".8"/>
<path d="M20.5 11C20 13 21 14.2 23 15.2C30 19 38 22 45 23.6C48 23.8 50 21.5 50 18.5L50.2 14.5C50 12.8 48.8 13 48 14L46.5 19C38 18 28 15 20.5 11Z" fill="#e6e6e6"/>
<path d="M20.5 11C22 5 29 1.5 33 2C40 3 46 8 48 14L46.5 19C38 18 28 15 20.5 11Z" fill="#d4d4d4"/>
<path d="M33 2C38 6 41 11.5 42 18.2M36.4 3C41 7 44 12 45 18.8" fill="none" stroke="#7c7c7c" stroke-width="1"/>
</g></svg><div class="lbl" style="left:0;top:32.5px;width:68px;text-align:center;line-height:11.5px;color:#4a4a4a;white-space:normal;letter-spacing:-.1px">Alte info<br>furnizori</div></div>
 <div class="gb" style="left:38.3px;top:438px;width:862.7px;height:49.5px"></div>
 <div class="btn " style="left:48px;top:443px;width:46px;height:38px"><svg style="left:-1px;top:-1px" width="47" height="38" viewBox="0 0 47 38"><path d="M15.5 5.6L19 6.1L23 7.2L27 7.8L30.8 9.4" stroke="#e11b22" stroke-width="1.9" fill="none"/><path d="M19.6 8.5V13M17.8 11.2L19.6 13.2L21.4 11.2" stroke="#e0506a" stroke-width="1" fill="none"/><rect x="15.5" y="16" width="15.5" height="2" fill="#e11b22"/><rect x="15.5" y="20" width="15.5" height="2" fill="#e11b22"/></svg><div class="cap">Adaug</div></div>
 <div class="btn " style="left:103px;top:443px;width:47px;height:38px"><svg style="left:-1px;top:-1px" width="47" height="38" viewBox="0 0 47 38"><rect x="15.2" y="14.5" width="17" height="3.6" fill="#fff" stroke="#e11b22" stroke-width="1"/><path d="M31.6 7.2L23.2 15.4" stroke="#111" stroke-width="3.2" stroke-linecap="round"/><path d="M31.2 7.6L24.6 14" stroke="#fff" stroke-width="1.2"/><path d="M22 16.6L24.2 14.2L23 13.6Z" fill="#111"/></svg><div class="cap">Editez</div></div>
 <div class="btn " style="left:157px;top:443px;width:47px;height:38px"><svg style="left:-1px;top:-1px" width="47" height="38" viewBox="0 0 47 38"><path d="M17.5 8L30.6 19.6M30.6 7.8L17.5 19.6" stroke="#e11b22" stroke-width="1.2" fill="none"/><circle cx="17.6" cy="8.4" r="1.3" fill="#e11b22"/><circle cx="17.6" cy="19.3" r="1.3" fill="#e11b22"/></svg><div class="cap">Sterg</div></div>
 <div class="btn off" style="left:217px;top:443px;width:47px;height:38px"><svg style="left:-1px;top:-1px" width="47" height="38" viewBox="0 0 47 38"><rect x="13.5" y="4.5" width="18.5" height="17.5" fill="#d6d6d4"/><path d="M16 6.5H28L29.5 8V19.5H16Z" fill="#6f6f6f"/><rect x="18.2" y="6.5" width="8.6" height="5.2" fill="#c9c9c9"/><rect x="18.6" y="14.6" width="8" height="4.9" fill="#8c8c8c"/><rect x="24.4" y="15.4" width="1.6" height="3.2" fill="#d8d8d8"/></svg><div class="cap">Salvez</div></div>
 <div class="btn off" style="left:271px;top:443px;width:47px;height:38px"><svg style="left:-1px;top:-1px" width="47" height="38" viewBox="0 0 47 38"><rect x="14.5" y="4.5" width="18.5" height="17.5" fill="#d8d8d6"/><circle cx="23.7" cy="12.7" r="5.7" fill="none" stroke="#8f8f8f" stroke-width="1.1"/><path d="M19.9 8.9L27.5 16.5M27.5 8.9L19.9 16.5" stroke="#9a9a9a" stroke-width="1"/></svg><div class="cap">Cancel</div></div>
 <div class="xr on" style="left:339.5px;top:450.5px"></div><div class="rl" style="left:356px;top:450.5px">Nume partener</div>
 <div class="xr" style="left:339.5px;top:468px"></div><div class="rl" style="left:356px;top:468px;letter-spacing:-.12px">Cod partener</div>
 <div class="xr" style="left:448px;top:459px"></div><div class="rl" style="left:464px;top:459px;letter-spacing:-.15px">Categorie (F=furn.; C=cons.)</div>
 <div class="tx w" style="left:632.3px;top:455px;width:124.6px;height:19.5px"></div>
 <div class="btn xp" style="left:762px;top:443.5px;width:60.5px;height:37.5px"><svg style="left:-1px;top:-1px" width="61" height="38" viewBox="0 0 61 38"><g fill="#e11b22"><rect x="22.2" y="5.5" width="12.6" height="2.2"/><rect x="22.2" y="5.5" width="1.6" height="9.5"/><rect x="26.2" y="5.5" width="1.4" height="7"/><rect x="30.4" y="5.5" width="1.4" height="6"/><rect x="33.4" y="5.5" width="1.4" height="5.5"/><rect x="22.2" y="10" width="8" height="1.2"/><rect x="22.2" y="13.6" width="5" height="1.4"/><path d="M28.2 10.4H31L31.6 11.6H33.4L34 10.4H36.2L38.2 15.6V19.6H33.8V16.4H31.4V19.6H27V15.6Z"/></g><rect x="28.6" y="16.4" width="1.6" height="1.6" fill="#fff"/><rect x="35.2" y="16.4" width="1.6" height="1.6" fill="#fff"/><rect x="24.2" y="8.4" width="1.6" height="1.2" fill="#fff"/><rect x="28" y="8.2" width="2" height="1.2" fill="#fff"/></svg><div class="cap">Cautare</div></div>
 <div class="btn " style="left:847px;top:443px;width:47px;height:38px"><svg style="left:-1px;top:-1px" width="47" height="38" viewBox="0 0 47 38"><path d="M16.6 7.6H28V20.4H23.5" fill="#fdfdfa" stroke="#222" stroke-width="1"/><path d="M17 9.2Q21 9 23.2 11.4V22.6L21.6 24H17Z" fill="#e11b22" stroke="#7a0c0c" stroke-width=".7"/><path d="M16.6 7.6L15.6 6.6M28 7.6L29.2 6.6" stroke="#333" stroke-width=".8"/><path d="M29.2 15.5H33.4M29.2 15.5L31 13.9M29.2 15.5L31 17.1" stroke="#111" stroke-width="1" fill="none"/></svg><div class="cap">Exit</div></div>
 <div id="grid">
 <div id="gt">Informatii despre consumatori</div>
 <div id="gl"></div><div id="gh">
 <div class="hc" style="left:38.45px;width:69.8px">IdConsumat</div>
 <div class="hc" style="left:111.35px;width:69.8px">ClasaParten</div>
 <div class="hc" style="left:184.25px;width:69.8px">CodConsum</div>
 <div class="hc" style="left:257.15px;width:69.8px">DenumireCo</div>
 <div class="hc" style="left:330.05px;width:69.8px">DenumireCo</div>
 <div class="hc" style="left:402.95px;width:69.8px">DomeniuActi</div>
 <div class="hc" style="left:475.85px;width:69.8px">Localitate</div>
 <div class="hc" style="left:548.75px;width:69.8px">Strada</div>
 <div class="hc" style="left:621.65px;width:69.8px">Numar</div>
 <div class="hc" style="left:694.55px;width:69.8px">CodPostal</div>
 <div class="hc" style="left:767.45px;width:69.8px">Judet</div>
 <div class="hc" style="left:840.35px;width:69.8px">CUI</div>
 </div><div id="gs"><div style="left:5px;top:102px;width:0;height:0;border-left:6px solid #fff;border-top:5px solid transparent;border-bottom:5px solid transparent"></div></div>
 <div class="gr" style="top:37.00px">
 <div class="gc" style="left:0.00px;width:73.35px;letter-spacing:-.5px">211</div>
 <div class="gc" style="left:73.35px;width:72.90px">C</div>
 <div class="gc" style="left:146.25px;width:72.90px">B65E</div>
 <div class="gc" style="left:219.15px;width:72.90px">LIMAR IMEX S</div>
 <div class="gc" style="left:292.05px;width:72.90px">SC LIMAR IME</div>
 <div class="gc" style="left:364.95px;width:72.90px;letter-spacing:-.5px">3100</div>
 <div class="gc" style="left:437.85px;width:72.90px">PLOIESTI</div>
 <div class="gc" style="left:510.75px;width:72.90px">SOS. DN1 A</div>
 <div class="gc" style="left:583.65px;width:72.90px">3</div>
 <div class="gc" style="left:656.55px;width:72.90px"></div>
 <div class="gc" style="left:729.45px;width:72.90px">PRAHOVA</div>
 <div class="gc" style="left:802.35px;width:53.35px"></div>
 </div>
 <div class="gr g" style="top:53.55px">
 <div class="gc" style="left:0.00px;width:73.35px;letter-spacing:-.5px">169</div>
 <div class="gc" style="left:73.35px;width:72.90px">C</div>
 <div class="gc" style="left:146.25px;width:72.90px">B64E</div>
 <div class="gc" style="left:219.15px;width:72.90px">POLITEH SA</div>
 <div class="gc" style="left:292.05px;width:72.90px">SC POLITEH S</div>
 <div class="gc" style="left:364.95px;width:72.90px;letter-spacing:-.5px">3100</div>
 <div class="gc" style="left:437.85px;width:72.90px">PLOIESTI</div>
 <div class="gc" style="left:510.75px;width:72.90px">POLIGONULUI</div>
 <div class="gc" style="left:583.65px;width:72.90px">2</div>
 <div class="gc" style="left:656.55px;width:72.90px"></div>
 <div class="gc" style="left:729.45px;width:72.90px">PRAHOVA</div>
 <div class="gc" style="left:802.35px;width:53.35px"></div>
 </div>
 <div class="gr" style="top:70.10px">
 <div class="gc" style="left:0.00px;width:73.35px;letter-spacing:-.5px">168</div>
 <div class="gc" style="left:73.35px;width:72.90px">C</div>
 <div class="gc" style="left:146.25px;width:72.90px">B63E</div>
 <div class="gc" style="left:219.15px;width:72.90px">HIDROELECT</div>
 <div class="gc" style="left:292.05px;width:72.90px">SC HIDROELE</div>
 <div class="gc" style="left:364.95px;width:72.90px;letter-spacing:-.5px">3100</div>
 <div class="gc" style="left:437.85px;width:72.90px">BUZAU</div>
 <div class="gc" style="left:510.75px;width:72.90px">DORIN PAVEL</div>
 <div class="gc" style="left:583.65px;width:72.90px">1</div>
 <div class="gc" style="left:656.55px;width:72.90px;letter-spacing:-.5px">120290</div>
 <div class="gc" style="left:729.45px;width:72.90px">BUZAU</div>
 <div class="gc" style="left:802.35px;width:53.35px"></div>
 </div>
 <div class="gr g" style="top:86.65px">
 <div class="gc" style="left:0.00px;width:73.35px;letter-spacing:-.5px">167</div>
 <div class="gc" style="left:73.35px;width:72.90px">F</div>
 <div class="gc" style="left:146.25px;width:72.90px;letter-spacing:-.5px">B13333414E</div>
 <div class="gc" style="left:219.15px;width:72.90px">HIDROELECT</div>
 <div class="gc" style="left:292.05px;width:72.90px">HIDROELECT</div>
 <div class="gc" style="left:364.95px;width:72.90px;letter-spacing:-.5px">3100</div>
 <div class="gc" style="left:437.85px;width:72.90px">BUZAU</div>
 <div class="gc" style="left:510.75px;width:72.90px">DORIN PAVEL</div>
 <div class="gc" style="left:583.65px;width:72.90px">1</div>
 <div class="gc" style="left:656.55px;width:72.90px;letter-spacing:-.5px">120290</div>
 <div class="gc" style="left:729.45px;width:72.90px">BUZAU</div>
 <div class="gc" style="left:802.35px;width:53.35px;letter-spacing:-.5px">13333414</div>
 </div>
 <div class="gr" style="top:103.20px">
 <div class="gc" style="left:0.00px;width:73.35px;letter-spacing:-.5px">166</div>
 <div class="gc" style="left:73.35px;width:72.90px">F</div>
 <div class="gc" style="left:146.25px;width:72.90px;letter-spacing:-.5px">B24387371E</div>
 <div class="gc" style="left:219.15px;width:72.90px">ENEL ENERGI</div>
 <div class="gc" style="left:292.05px;width:72.90px">ENEL ENERGI</div>
 <div class="gc" style="left:364.95px;width:72.90px;letter-spacing:-.5px">3100</div>
 <div class="gc" style="left:437.85px;width:72.90px">BUCURESTI</div>
 <div class="gc" style="left:510.75px;width:72.90px">B-DUL ION  M</div>
 <div class="gc" style="left:583.65px;width:72.90px">41-43 CORP A</div>
 <div class="gc" style="left:656.55px;width:72.90px;letter-spacing:-.5px">011172</div>
 <div class="gc" style="left:729.45px;width:72.90px"></div>
 <div class="gc" style="left:802.35px;width:53.35px;letter-spacing:-.5px">24387371</div>
 </div>
 <div class="gr g" style="top:119.75px">
 <div class="gc" style="left:0.00px;width:73.35px;letter-spacing:-.5px">164</div>
 <div class="gc" style="left:73.35px;width:72.90px">C</div>
 <div class="gc" style="left:146.25px;width:72.90px">B62E</div>
 <div class="gc" style="left:219.15px;width:72.90px">HIDROELECT</div>
 <div class="gc" style="left:292.05px;width:72.90px">HIDROELECT</div>
 <div class="gc" style="left:364.95px;width:72.90px;letter-spacing:-.5px">3100</div>
 <div class="gc" style="left:437.85px;width:72.90px">CURTEA DE A</div>
 <div class="gc" style="left:510.75px;width:72.90px">BASARABILOR</div>
 <div class="gc" style="left:583.65px;width:72.90px">82-84</div>
 <div class="gc" style="left:656.55px;width:72.90px;letter-spacing:-.5px">115300</div>
 <div class="gc" style="left:729.45px;width:72.90px"></div>
 <div class="gc" style="left:802.35px;width:53.35px;letter-spacing:-.5px">13358702</div>
 </div>
 <div class="gr" style="top:136.30px">
 <div class="gc" style="left:0.00px;width:73.35px;letter-spacing:-.5px">163</div>
 <div class="gc" style="left:73.35px;width:72.90px">C</div>
 <div class="gc" style="left:146.25px;width:72.90px">B61E</div>
 <div class="gc" style="left:219.15px;width:72.90px;background:#ebe9dc"><span style="position:static;background:#316ac5;color:#fff;display:inline-block;height:12px;line-height:12.5px;padding-right:3.5px;margin-left:0;vertical-align:top;margin-top:3.4px">LAFARGE</span></div>
 <div class="gc" style="left:292.05px;width:72.90px">SC LAFARGE</div>
 <div class="gc" style="left:364.95px;width:72.90px;letter-spacing:-.5px">3100</div>
 <div class="gc" style="left:437.85px;width:72.90px">BUCURESTI S</div>
 <div class="gc" style="left:510.75px;width:72.90px">MODROGAN</div>
 <div class="gc" style="left:583.65px;width:72.90px">20,ETAJ 3</div>
 <div class="gc" style="left:656.55px;width:72.90px"></div>
 <div class="gc" style="left:729.45px;width:72.90px">BUCURESTI</div>
 <div class="gc" style="left:802.35px;width:53.35px"></div>
 </div>
 <div class="gr g" style="top:152.85px">
 <div class="gc" style="left:0.00px;width:73.35px;letter-spacing:-.5px">162</div>
 <div class="gc" style="left:73.35px;width:72.90px">F</div>
 <div class="gc" style="left:146.25px;width:72.90px;letter-spacing:-.5px">B6497759E</div>
 <div class="gc" style="left:219.15px;width:72.90px">EURO - PEC S</div>
 <div class="gc" style="left:292.05px;width:72.90px">SC EURO - PE</div>
 <div class="gc" style="left:364.95px;width:72.90px;letter-spacing:-.5px">3100</div>
 <div class="gc" style="left:437.85px;width:72.90px">GALATI</div>
 <div class="gc" style="left:510.75px;width:72.90px">REGIMENT 11</div>
 <div class="gc" style="left:583.65px;width:72.90px">2 F</div>
 <div class="gc" style="left:656.55px;width:72.90px;letter-spacing:-.5px">800322</div>
 <div class="gc" style="left:729.45px;width:72.90px">GALATI</div>
 <div class="gc" style="left:802.35px;width:53.35px;letter-spacing:-.5px">6497759</div>
 </div>
 <div class="gr" style="top:169.40px">
 <div class="gc" style="left:0.00px;width:73.35px;letter-spacing:-.5px">161</div>
 <div class="gc" style="left:73.35px;width:72.90px">C</div>
 <div class="gc" style="left:146.25px;width:72.90px">B60E</div>
 <div class="gc" style="left:219.15px;width:72.90px">CONFIND SRL</div>
 <div class="gc" style="left:292.05px;width:72.90px">SC CONFIND</div>
 <div class="gc" style="left:364.95px;width:72.90px;letter-spacing:-.5px">3100</div>
 <div class="gc" style="left:437.85px;width:72.90px">CAMPINA</div>
 <div class="gc" style="left:510.75px;width:72.90px">PROGRESULU</div>
 <div class="gc" style="left:583.65px;width:72.90px">2</div>
 <div class="gc" style="left:656.55px;width:72.90px"></div>
 <div class="gc" style="left:729.45px;width:72.90px">PRAHOVA</div>
 <div class="gc" style="left:802.35px;width:53.35px"></div>
 </div>
 <div class="gr g" style="top:185.95px">
 <div class="gc" style="left:0.00px;width:73.35px"></div>
 <div class="gc" style="left:73.35px;width:72.90px"></div>
 <div class="gc" style="left:146.25px;width:72.90px"></div>
 <div class="gc" style="left:219.15px;width:72.90px"></div>
 <div class="gc" style="left:292.05px;width:72.90px"></div>
 <div class="gc" style="left:364.95px;width:72.90px"></div>
 <div class="gc" style="left:437.85px;width:72.90px"></div>
 <div class="gc" style="left:510.75px;width:72.90px"></div>
 <div class="gc" style="left:583.65px;width:72.90px"></div>
 <div class="gc" style="left:656.55px;width:72.90px"></div>
 <div class="gc" style="left:729.45px;width:72.90px"></div>
 <div class="gc" style="left:802.35px;width:53.35px"></div>
 </div>
 <div id="vsb" class="sbt" style="left:890.5px;top:19.4px;width:16.5px;height:180px"><div class="sbb" style="top:.2px;height:16px"><svg width="10" height="7" viewBox="0 0 10 7"><path d="M1.2 5.6L5 1.8L8.8 5.6" fill="none" stroke="#4d6185" stroke-width="2"/></svg></div><div class="sbh" style="top:47.6px;height:9.6px"></div><div class="sbb" style="top:157px;height:17px"><svg width="10" height="7" viewBox="0 0 10 7"><path d="M1.2 1.4L5 5.2L8.8 1.4" fill="none" stroke="#4d6185" stroke-width="2"/></svg></div></div>
 </div>
</div>
</body>
</html>
